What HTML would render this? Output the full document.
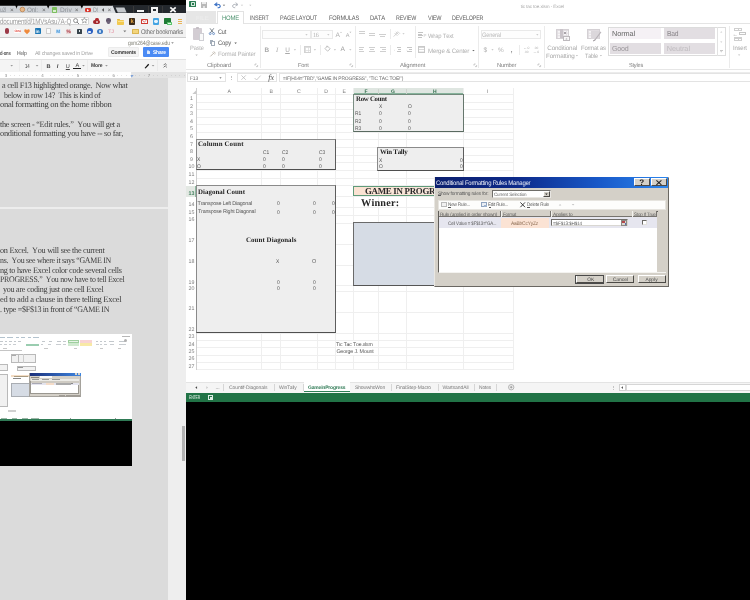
<!DOCTYPE html><html><head><meta charset="utf-8"><title>tic tac toe.xlsm - Excel</title><style>
html,body{margin:0;padding:0;}
body{width:750px;height:600px;overflow:hidden;background:#fff;position:relative;font-family:"Liberation Sans",sans-serif;}
.r{position:absolute;box-sizing:border-box;}
.t{position:absolute;white-space:pre;font-family:"Liberation Sans",sans-serif;text-rendering:geometricPrecision;font-kerning:none;}
.s{font-family:"Liberation Serif",serif;}
svg{position:absolute;overflow:visible;}
#w{position:absolute;left:-10px;top:-10px;width:770px;height:620px;background:#fff;filter:blur(0.4px);}
#c{position:absolute;left:10px;top:10px;width:750px;height:600px;}
</style></head><body>
<div id="w"><div id="c">
<div class="r" style="left:-10.00px;top:78.40px;width:178.00px;height:532.00px;background:#dbdbdb;"></div>
<div class="r" style="left:168.00px;top:78.40px;width:17.70px;height:532.00px;background:#eeeeee;"></div>
<div class="r" style="left:182.30px;top:426.00px;width:3.00px;height:35.00px;background:#b3b3b3;"></div>
<div class="r" style="left:-10.00px;top:-10.00px;width:195.70px;height:23.40px;background:#050505;"></div>
<div class="r" style="left:112.00px;top:4.80px;width:73.70px;height:8.80px;background:#24282d;"></div>
<svg style="left:0;top:0" width="190" height="14"><path d="M-22.5 13.4 L-19.2 5.8 L15.4 5.8 L18.7 13.4 Z" fill="#cdd1d6"/></svg>
<svg style="left:0;top:0" width="190" height="14"><path d="M14.3 13.4 L17.6 5.8 L46.9 5.8 L50.2 13.4 Z" fill="#cdd1d6"/></svg>
<svg style="left:0;top:0" width="190" height="14"><path d="M46.1 13.4 L49.4 5.8 L80.6 5.8 L83.9 13.4 Z" fill="#cdd1d6"/></svg>
<svg style="left:0;top:0" width="190" height="14"><path d="M79.8 13.4 L83.1 5.8 L112.7 5.8 L116.0 13.4 Z" fill="#d9dcdf"/></svg>
<svg style="left:0;top:0" width="190" height="14"><path d="M115.6 7.4 L124.4 7.4 L126.6 12.6 L117.8 12.6 Z" fill="#c4c8cc"/></svg>
<span class="t" style="left:0.00px;top:8px;font-size:6.6px;line-height:6.6px;color:#8d9196;letter-spacing:-0.231px;transform:scaleX(0.7390);transform-origin:0 50%;">u2l</span>
<span class="t" style="left:10.00px;top:8px;font-size:6.5px;line-height:6.5px;color:#666;">×</span>
<svg style="left:20.3px;top:7.4px" width="5" height="5"><circle cx="2.4" cy="2.5" r="2.3" fill="#e7b98a" stroke="#b9783f" stroke-width="0.7"/></svg>
<span class="t" style="left:27.30px;top:8px;font-size:6.6px;line-height:6.6px;color:#8d9196;letter-spacing:-0.231px;transform:scaleX(0.9579);transform-origin:0 50%;">Onl:</span>
<span class="t" style="left:42.00px;top:8px;font-size:6.5px;line-height:6.5px;color:#666;">×</span>
<div class="r" style="left:52.00px;top:7.20px;width:5.40px;height:5.40px;background:#7cbf5d;border-radius:0.8px;"></div>
<div class="r" style="left:53.00px;top:9.60px;width:3.40px;height:2.00px;background:#d9efcf;"></div>
<span class="t" style="left:60.00px;top:8px;font-size:6.6px;line-height:6.6px;color:#8d9196;letter-spacing:0.066px;">Driv</span>
<span class="t" style="left:74.80px;top:8px;font-size:6.5px;line-height:6.5px;color:#666;">×</span>
<div class="r" style="left:85.30px;top:7.60px;width:5.60px;height:4.60px;background:#d8362c;border-radius:1.2px;"></div>
<svg style="left:87.3px;top:8.7px" width="3" height="3"><path d="M0 0 L2.2 1.2 L0 2.4 Z" fill="#fff"/></svg>
<span class="t" style="left:93.00px;top:8px;font-size:6.6px;line-height:6.6px;color:#8d9196;letter-spacing:-0.231px;transform:scaleX(0.8154);transform-origin:0 50%;">D!</span>
<svg style="left:0;top:0" width="750" height="600"><polygon points="103.98,8.09 103.98,11.71 101.79,9.90" fill="#555"/></svg>
<span class="t" style="left:107.40px;top:8px;font-size:6.5px;line-height:6.5px;color:#666;">×</span>
<div class="r" style="left:133.30px;top:5.60px;width:0.60px;height:7.80px;background:#3a3a3a;"></div>
<div class="r" style="left:147.60px;top:5.60px;width:0.60px;height:7.80px;background:#3a3a3a;"></div>
<div class="r" style="left:162.00px;top:5.60px;width:0.60px;height:7.80px;background:#3a3a3a;"></div>
<div class="r" style="left:137.00px;top:10.40px;width:6.60px;height:2.10px;background:#f4f4f4;"></div>
<div class="r" style="left:150.70px;top:7.10px;width:7.00px;height:5.70px;background:#f4f4f4;"></div>
<div class="r" style="left:153.40px;top:8.60px;width:3.00px;height:2.40px;background:#2a2e33;"></div>
<svg style="left:169.7px;top:7.3px" width="6" height="5.4"><path d="M0.3 0.3 L5.7 5.1 M5.7 0.3 L0.3 5.1" stroke="#f6f6f6" stroke-width="1.8" fill="none"/></svg>
<div class="r" style="left:-10.00px;top:13.40px;width:195.70px;height:23.60px;background:#f1f1f1;"></div>
<div class="r" style="left:-10.00px;top:36.60px;width:195.70px;height:0.70px;background:#cdcdcd;"></div>
<div class="r" style="left:-2.00px;top:16.60px;width:91.00px;height:8.20px;background:#ffffff;border:0.6px solid #d6d6d6;border-radius:1px;"></div>
<span class="t" style="left:0.20px;top:18px;font-size:7.8px;line-height:7.8px;color:#9a9a9a;letter-spacing:-0.273px;transform:scaleX(0.8036);transform-origin:0 50%;">document/d/1MVsAsu7A-Q</span>
<svg style="left:73.4px;top:17.8px" width="7" height="7"><circle cx="2.6" cy="2.6" r="2" fill="none" stroke="#777" stroke-width="0.8"/><path d="M4 4 L6 6" stroke="#777" stroke-width="0.9"/></svg>
<svg style="left:81.2px;top:17.4px" width="7" height="7"><path d="M3.4 0.5 L4.2 2.5 L6.3 2.6 L4.7 4 L5.2 6.1 L3.4 4.9 L1.6 6.1 L2.1 4 L0.5 2.6 L2.6 2.5 Z" fill="none" stroke="#808080" stroke-width="0.6"/></svg>
<div class="r" style="left:93.40px;top:19.60px;width:6.80px;height:4.00px;background:#a3262a;border-radius:2px;"></div>
<div class="r" style="left:94.80px;top:18.40px;width:4.00px;height:3.00px;background:#b02a2e;border-radius:1.5px;"></div>
<div class="r" style="left:95.80px;top:21.00px;width:2.00px;height:1.60px;background:#e6b8b8;border-radius:0.8px;"></div>
<div class="r" style="left:105.80px;top:18.40px;width:5.00px;height:4.40px;background:#62566c;border-radius:2.2px;"></div>
<div class="r" style="left:107.40px;top:21.40px;width:2.60px;height:3.00px;background:#6f647a;border-radius:1.2px;"></div>
<div class="r" style="left:117.00px;top:19.60px;width:7.40px;height:5.00px;background:#f2c94f;border-radius:0.8px;"></div>
<div class="r" style="left:117.00px;top:18.80px;width:3.20px;height:1.60px;background:#e8b93a;border-radius:0.5px;"></div>
<div class="r" style="left:117.60px;top:20.60px;width:6.20px;height:0.50px;background:#f8e08e;"></div>
<div class="r" style="left:129.00px;top:18.20px;width:6.40px;height:6.60px;background:#3a2b1a;border-radius:0.8px;"></div>
<span class="t" style="left:130.60px;top:19px;font-size:6px;line-height:6px;color:#e2a23e;font-weight:bold;">k</span>
<div class="r" style="left:141.40px;top:18.80px;width:6.60px;height:5.40px;background:#f7f7f7;border-radius:0.6px;border:0.8px solid #d23a30;"></div>
<svg style="left:141.4px;top:18.8px" width="7" height="6"><path d="M1.2 1.2 L3.3 3 L5.4 1.2" fill="none" stroke="#d23a30" stroke-width="0.7"/></svg>
<div class="r" style="left:152.80px;top:18.20px;width:6.60px;height:6.60px;background:#45a4e2;border-radius:1px;"></div>
<div class="r" style="left:154.40px;top:19.80px;width:3.60px;height:3.00px;background:#eaf5fd;border-radius:1.4px;"></div>
<div class="r" style="left:164.40px;top:18.00px;width:6.40px;height:6.00px;background:#1f7a34;border-radius:0.6px;"></div>
<div class="r" style="left:166.80px;top:21.80px;width:5.40px;height:3.60px;background:#58c56c;border-radius:0.5px;"></div>
<div class="r" style="left:168.00px;top:22.60px;width:3.00px;height:1.60px;background:#e4f6e7;"></div>
<div class="r" style="left:177.80px;top:19.00px;width:4.40px;height:1.20px;background:#e9b458;"></div>
<div class="r" style="left:177.80px;top:20.90px;width:4.40px;height:1.20px;background:#e9b458;"></div>
<div class="r" style="left:177.80px;top:22.80px;width:4.40px;height:1.20px;background:#e9b458;"></div>
<div class="r" style="left:4.60px;top:28.40px;width:4.20px;height:5.80px;background:#9c3a48;border-radius:2px;"></div>
<div class="r" style="left:14.20px;top:29.40px;width:6.00px;height:3.60px;background:#ffffff;border-radius:1px;"></div>
<span class="t" style="left:14.60px;top:30px;font-size:3.4px;line-height:3.4px;color:#e03a2e;font-weight:bold;">One</span>
<svg style="left:24.4px;top:28.8px" width="6" height="5.4"><path d="M3 5.2 L0.3 2.4 Q-0.2 0.4 1.5 0.3 Q2.6 0.4 3 1.3 Q3.4 0.4 4.5 0.3 Q6.2 0.4 5.7 2.4 Z" fill="#ef8a3c"/></svg>
<div class="r" style="left:34.80px;top:28.40px;width:5.80px;height:5.80px;background:#1b76b5;border-radius:0.8px;"></div>
<span class="t" style="left:35.60px;top:30px;font-size:4.6px;line-height:4.6px;color:#fff;font-weight:bold;">in</span>
<div class="r" style="left:46.40px;top:28.40px;width:4.20px;height:5.60px;background:#fbfbfb;border-radius:0.3px;border:0.5px solid #cfcfcf;"></div>
<div class="r" style="left:55.60px;top:28.60px;width:5.40px;height:5.40px;background:#dfeefa;border-radius:0.5px;"></div>
<span class="t" style="left:56.20px;top:30px;font-size:4.6px;line-height:4.6px;color:#3b8fd6;font-weight:bold;">M</span>
<div class="r" style="left:66.00px;top:28.60px;width:5.40px;height:5.40px;background:#e9d6d6;border-radius:0.5px;"></div>
<span class="t" style="left:66.60px;top:31px;font-size:4.8px;line-height:4.8px;color:#a8323e;font-weight:bold;">%</span>
<div class="r" style="left:76.60px;top:28.60px;width:5.40px;height:5.40px;background:#39444c;border-radius:0.6px;"></div>
<div class="r" style="left:78.60px;top:30.40px;width:1.50px;height:1.50px;background:#dfe7ea;"></div>
<div class="r" style="left:86.80px;top:28.40px;width:5.80px;height:5.80px;background:#2a5fc0;border-radius:2.9px;"></div>
<div class="r" style="left:88.20px;top:31.40px;width:3.00px;height:1.80px;background:#e8eef8;border-radius:0.8px;"></div>
<div class="r" style="left:97.20px;top:28.60px;width:5.60px;height:5.60px;background:#3b78c2;border-radius:2.8px;"></div>
<div class="r" style="left:98.80px;top:30.20px;width:2.40px;height:2.40px;background:#c8dcf2;border-radius:1.2px;"></div>
<span class="t" style="left:108.20px;top:30px;font-size:5px;line-height:5px;color:#e7a6b4;font-weight:bold;">TJ</span>
<svg style="left:0;top:0" width="750" height="600"><polygon points="123.33,30.54 126.30,30.54 124.81,32.25" fill="#777"/></svg>
<div class="r" style="left:132.20px;top:28.80px;width:6.40px;height:4.80px;background:#f3d57c;border-radius:0.6px;border:0.5px solid #d9b552;"></div>
<span class="t" style="left:140.70px;top:30px;font-size:6.8px;line-height:6.8px;color:#6a6a6a;letter-spacing:-0.238px;transform:scaleX(0.8647);transform-origin:0 50%;">Other bookmarks</span>
<span class="t" style="left:128.00px;top:41px;font-size:6.2px;line-height:6.2px;color:#85857a;letter-spacing:-0.217px;transform:scaleX(0.8372);transform-origin:0 50%;">gxm264@case.edu</span>
<svg style="left:0;top:0" width="750" height="600"><polygon points="171.16,42.14 173.80,42.14 172.48,43.66" fill="#888"/></svg>
<span class="t" style="left:0.00px;top:52px;font-size:5.8px;line-height:5.8px;color:#555;font-weight:bold;letter-spacing:-0.203px;transform:scaleX(0.7246);transform-origin:0 50%;">d-ons</span>
<span class="t" style="left:17.00px;top:52px;font-size:5.8px;line-height:5.8px;color:#555;letter-spacing:-0.203px;transform:scaleX(0.8719);transform-origin:0 50%;">Help</span>
<span class="t" style="left:35.00px;top:52px;font-size:5.6px;line-height:5.6px;color:#a3a3a3;letter-spacing:-0.196px;transform:scaleX(0.9486);transform-origin:0 50%;">All changes saved in Drive</span>
<div class="r" style="left:108.00px;top:46.70px;width:31.30px;height:10.30px;background:#f4f4f4;border:0.5px solid #ececec;border-radius:1px;"></div>
<span class="t" style="left:111.00px;top:51px;font-size:5.4px;line-height:5.4px;color:#3c3c3c;font-weight:bold;letter-spacing:-0.189px;transform:scaleX(0.9489);transform-origin:0 50%;">Comments</span>
<div class="r" style="left:143.00px;top:46.70px;width:26.30px;height:10.30px;background:#4a8af4;border-radius:1px;"></div>
<div class="r" style="left:146.60px;top:51.00px;width:3.00px;height:2.60px;background:#dbe8fd;border-radius:0.5px;"></div>
<div class="r" style="left:147.20px;top:49.80px;width:1.80px;height:1.80px;border:0.5px solid #dbe8fd;border-radius:1px 1px 0 0;"></div>
<span class="t" style="left:153.30px;top:51px;font-size:5.4px;line-height:5.4px;color:#ffffff;font-weight:bold;letter-spacing:-0.189px;transform:scaleX(0.9046);transform-origin:0 50%;">Share</span>
<div class="r" style="left:-10.00px;top:58.70px;width:195.70px;height:13.40px;background:#f4f4f4;border-top:0.6px solid #e2e2e2;"></div>
<svg style="left:0;top:0" width="750" height="600"><polygon points="10.36,65.04 13.00,65.04 11.68,66.56" fill="#999"/></svg>
<div class="r" style="left:18.70px;top:59.60px;width:0.50px;height:11.60px;background:#ebebeb;"></div>
<span class="t" style="left:24.70px;top:64px;font-size:6px;line-height:6px;color:#444;letter-spacing:-0.210px;transform:scaleX(0.7180);transform-origin:0 50%;">14</span>
<svg style="left:0;top:0" width="750" height="600"><polygon points="35.76,65.04 38.40,65.04 37.08,66.56" fill="#999"/></svg>
<div class="r" style="left:41.30px;top:59.60px;width:0.50px;height:11.60px;background:#ebebeb;"></div>
<span class="t" style="left:46.60px;top:65px;font-size:5.6px;line-height:5.6px;color:#444;font-weight:bold;">B</span>
<span class="t" style="left:56.80px;top:65px;font-size:5.6px;line-height:5.6px;color:#444;font-weight:bold;font-style:italic;">I</span>
<span class="t" style="left:65.80px;top:65px;font-size:5.6px;line-height:5.6px;color:#444;text-decoration:underline;">U</span>
<span class="t" style="left:75.60px;top:64px;font-size:5.6px;line-height:5.6px;color:#444;">A</span>
<div class="r" style="left:73.00px;top:68.20px;width:8.00px;height:1.00px;background:#222;"></div>
<svg style="left:0;top:0" width="750" height="600"><polygon points="82.16,65.04 84.80,65.04 83.48,66.56" fill="#999"/></svg>
<div class="r" style="left:87.30px;top:59.60px;width:0.50px;height:11.60px;background:#ebebeb;"></div>
<span class="t" style="left:91.30px;top:64px;font-size:5.4px;line-height:5.4px;color:#444;font-weight:bold;letter-spacing:-0.189px;transform:scaleX(0.9395);transform-origin:0 50%;">More</span>
<svg style="left:0;top:0" width="750" height="600"><polygon points="105.16,65.04 107.80,65.04 106.48,66.56" fill="#999"/></svg>
<svg style="left:144px;top:62.8px" width="6" height="6"><path d="M0.6 5 L4.2 0.8 L5.2 1.8 L1.6 5.6 Z" fill="#111"/></svg>
<svg style="left:0;top:0" width="750" height="600"><polygon points="151.76,65.04 154.40,65.04 153.08,66.56" fill="#999"/></svg>
<div class="r" style="left:157.30px;top:59.60px;width:0.50px;height:11.60px;background:#ebebeb;"></div>
<svg style="left:162.6px;top:63.2px" width="5" height="5"><path d="M0.6 2.2 L2.2 0.6 L3.8 2.2 M0.6 4.4 L2.2 2.8 L3.8 4.4" fill="none" stroke="#555" stroke-width="0.8"/></svg>
<div class="r" style="left:0.00px;top:72.10px;width:185.70px;height:6.30px;background:#ffffff;"></div>
<div class="r" style="left:131.30px;top:72.10px;width:54.40px;height:6.30px;background:#e4e4e4;"></div>
<span class="t" style="left:4.80px;top:74px;font-size:4.4px;line-height:4.4px;color:#8a8a8a;">3</span>
<span class="t" style="left:41.20px;top:74px;font-size:4.4px;line-height:4.4px;color:#8a8a8a;">4</span>
<span class="t" style="left:76.80px;top:74px;font-size:4.4px;line-height:4.4px;color:#8a8a8a;">5</span>
<span class="t" style="left:112.50px;top:74px;font-size:4.4px;line-height:4.4px;color:#8a8a8a;">6</span>
<span class="t" style="left:147.80px;top:74px;font-size:4.4px;line-height:4.4px;color:#8a8a8a;">7</span>
<svg style="left:129.5px;top:75px" width="4" height="3"><path d="M0 0 L3.6 0 L1.8 2.6 Z" fill="#7fa3d8"/></svg>
<div class="r" style="left:9.60px;top:74.80px;width:0.40px;height:1.00px;background:#e3e3e3;"></div>
<div class="r" style="left:14.07px;top:74.80px;width:0.40px;height:1.00px;background:#e3e3e3;"></div>
<div class="r" style="left:18.54px;top:74.80px;width:0.40px;height:1.00px;background:#e3e3e3;"></div>
<div class="r" style="left:23.01px;top:74.80px;width:0.40px;height:1.00px;background:#e3e3e3;"></div>
<div class="r" style="left:27.48px;top:74.80px;width:0.40px;height:1.00px;background:#e3e3e3;"></div>
<div class="r" style="left:31.95px;top:74.80px;width:0.40px;height:1.00px;background:#e3e3e3;"></div>
<div class="r" style="left:36.42px;top:74.80px;width:0.40px;height:1.00px;background:#e3e3e3;"></div>
<div class="r" style="left:49.83px;top:74.80px;width:0.40px;height:1.00px;background:#e3e3e3;"></div>
<div class="r" style="left:54.30px;top:74.80px;width:0.40px;height:1.00px;background:#e3e3e3;"></div>
<div class="r" style="left:58.77px;top:74.80px;width:0.40px;height:1.00px;background:#e3e3e3;"></div>
<div class="r" style="left:63.24px;top:74.80px;width:0.40px;height:1.00px;background:#e3e3e3;"></div>
<div class="r" style="left:67.71px;top:74.80px;width:0.40px;height:1.00px;background:#e3e3e3;"></div>
<div class="r" style="left:72.18px;top:74.80px;width:0.40px;height:1.00px;background:#e3e3e3;"></div>
<div class="r" style="left:81.12px;top:74.80px;width:0.40px;height:1.00px;background:#e3e3e3;"></div>
<div class="r" style="left:85.59px;top:74.80px;width:0.40px;height:1.00px;background:#e3e3e3;"></div>
<div class="r" style="left:90.06px;top:74.80px;width:0.40px;height:1.00px;background:#e3e3e3;"></div>
<div class="r" style="left:94.53px;top:74.80px;width:0.40px;height:1.00px;background:#e3e3e3;"></div>
<div class="r" style="left:99.00px;top:74.80px;width:0.40px;height:1.00px;background:#e3e3e3;"></div>
<div class="r" style="left:103.47px;top:74.80px;width:0.40px;height:1.00px;background:#e3e3e3;"></div>
<div class="r" style="left:107.94px;top:74.80px;width:0.40px;height:1.00px;background:#e3e3e3;"></div>
<div class="r" style="left:116.88px;top:74.80px;width:0.40px;height:1.00px;background:#e3e3e3;"></div>
<div class="r" style="left:121.35px;top:74.80px;width:0.40px;height:1.00px;background:#e3e3e3;"></div>
<div class="r" style="left:125.82px;top:74.80px;width:0.40px;height:1.00px;background:#e3e3e3;"></div>
<div class="r" style="left:130.29px;top:74.80px;width:0.40px;height:1.00px;background:#e3e3e3;"></div>
<div class="r" style="left:134.76px;top:74.80px;width:0.40px;height:1.00px;background:#d2d2d2;"></div>
<div class="r" style="left:139.23px;top:74.80px;width:0.40px;height:1.00px;background:#d2d2d2;"></div>
<div class="r" style="left:143.70px;top:74.80px;width:0.40px;height:1.00px;background:#d2d2d2;"></div>
<div class="r" style="left:152.64px;top:74.80px;width:0.40px;height:1.00px;background:#d2d2d2;"></div>
<div class="r" style="left:157.11px;top:74.80px;width:0.40px;height:1.00px;background:#d2d2d2;"></div>
<div class="r" style="left:161.58px;top:74.80px;width:0.40px;height:1.00px;background:#d2d2d2;"></div>
<div class="r" style="left:166.05px;top:74.80px;width:0.40px;height:1.00px;background:#d2d2d2;"></div>
<div class="r" style="left:170.52px;top:74.80px;width:0.40px;height:1.00px;background:#d2d2d2;"></div>
<div class="r" style="left:174.99px;top:74.80px;width:0.40px;height:1.00px;background:#d2d2d2;"></div>
<div class="r" style="left:179.46px;top:74.80px;width:0.40px;height:1.00px;background:#d2d2d2;"></div>
<div class="r" style="left:183.93px;top:74.80px;width:0.40px;height:1.00px;background:#d2d2d2;"></div>
<span class="t s" style="left:2.00px;top:81px;font-size:8.6px;line-height:8.6px;color:#3c3c3c;letter-spacing:-0.301px;transform:scaleX(0.9595);transform-origin:0 50%;">a cell F13 highlighted orange.  Now what</span>
<span class="t s" style="left:3.60px;top:91px;font-size:8.6px;line-height:8.6px;color:#3c3c3c;letter-spacing:-0.301px;transform:scaleX(0.9254);transform-origin:0 50%;">below in row 14?  This is kind of</span>
<span class="t s" style="left:0.00px;top:100px;font-size:8.6px;line-height:8.6px;color:#3c3c3c;letter-spacing:-0.301px;transform:scaleX(0.9928);transform-origin:0 50%;">onal formatting on the home ribbon</span>
<span class="t s" style="left:0.00px;top:120px;font-size:8.6px;line-height:8.6px;color:#3c3c3c;letter-spacing:-0.301px;transform:scaleX(0.9577);transform-origin:0 50%;">the screen - “Edit rules.”  You will get a</span>
<span class="t s" style="left:0.00px;top:129px;font-size:8.6px;line-height:8.6px;color:#3c3c3c;letter-spacing:-0.301px;transform:scaleX(0.9774);transform-origin:0 50%;">onditional formatting you have -- so far,</span>
<div class="r" style="left:-10.00px;top:207.00px;width:178.00px;height:2.30px;background:#ededed;"></div>
<span class="t s" style="left:0.00px;top:246px;font-size:8.6px;line-height:8.6px;color:#3c3c3c;letter-spacing:-0.301px;transform:scaleX(0.9596);transform-origin:0 50%;">on Excel.  You will see the current</span>
<span class="t s" style="left:0.00px;top:256px;font-size:8.6px;line-height:8.6px;color:#3c3c3c;letter-spacing:-0.301px;transform:scaleX(0.9175);transform-origin:0 50%;">ns.  You see where it says “GAME IN</span>
<span class="t s" style="left:0.00px;top:266px;font-size:8.6px;line-height:8.6px;color:#3c3c3c;letter-spacing:-0.301px;transform:scaleX(0.9520);transform-origin:0 50%;">ng to have Excel color code several cells</span>
<span class="t s" style="left:0.00px;top:275px;font-size:8.6px;line-height:8.6px;color:#3c3c3c;letter-spacing:-0.301px;transform:scaleX(0.9142);transform-origin:0 50%;">PROGRESS.”  You now have to tell Excel</span>
<span class="t s" style="left:3.00px;top:285px;font-size:8.6px;line-height:8.6px;color:#3c3c3c;letter-spacing:-0.301px;transform:scaleX(0.9452);transform-origin:0 50%;">you are coding just one cell Excel</span>
<span class="t s" style="left:0.00px;top:295px;font-size:8.6px;line-height:8.6px;color:#3c3c3c;letter-spacing:-0.301px;transform:scaleX(0.9876);transform-origin:0 50%;">ed to add a clause in there telling Excel</span>
<span class="t s" style="left:0.40px;top:305px;font-size:8.6px;line-height:8.6px;color:#3c3c3c;letter-spacing:-0.301px;transform:scaleX(0.9310);transform-origin:0 50%;">. type =$F$13 in front of “GAME IN</span>
<div class="r" style="left:-10.00px;top:333.60px;width:142.00px;height:87.40px;background:#ffffff;"></div>
<div class="r" style="left:-10.00px;top:421.00px;width:142.00px;height:45.00px;background:#000000;"></div>
<div class="r" style="left:-10.00px;top:419.40px;width:142.00px;height:1.70px;background:#2f7a55;"></div>
<div class="r" style="left:0.00px;top:352.40px;width:47.00px;height:66.00px;background-image:linear-gradient(#ececec 0.4px,transparent 0.4px),linear-gradient(90deg,#ececec 0.4px,transparent 0.4px);background-size:6px 2.6px,6px 2.6px;"></div>
<div class="r" style="left:0.00px;top:337.00px;width:5.00px;height:0.90px;background:#b4c3ce;"></div>
<div class="r" style="left:7.00px;top:337.00px;width:6.00px;height:0.90px;background:#b4c3ce;"></div>
<div class="r" style="left:15.50px;top:337.00px;width:3.50px;height:0.90px;background:#b4c3ce;"></div>
<div class="r" style="left:21.00px;top:337.00px;width:4.00px;height:0.90px;background:#b4c3ce;"></div>
<div class="r" style="left:27.60px;top:337.00px;width:3.00px;height:0.90px;background:#b4c3ce;"></div>
<div class="r" style="left:33.00px;top:337.00px;width:6.00px;height:0.90px;background:#b4c3ce;"></div>
<div class="r" style="left:0.00px;top:340.60px;width:3.00px;height:1.00px;background:#c3c8cc;"></div>
<div class="r" style="left:5.00px;top:340.60px;width:2.40px;height:1.00px;background:#c3c8cc;"></div>
<div class="r" style="left:9.00px;top:340.60px;width:3.00px;height:1.00px;background:#c3c8cc;"></div>
<div class="r" style="left:14.00px;top:340.60px;width:2.00px;height:1.00px;background:#c3c8cc;"></div>
<div class="r" style="left:18.00px;top:340.60px;width:3.00px;height:1.00px;background:#c3c8cc;"></div>
<div class="r" style="left:42.00px;top:340.60px;width:3.00px;height:1.00px;background:#c3c8cc;"></div>
<div class="r" style="left:49.00px;top:340.60px;width:3.00px;height:1.00px;background:#c3c8cc;"></div>
<div class="r" style="left:57.00px;top:340.60px;width:4.00px;height:1.00px;background:#c3c8cc;"></div>
<div class="r" style="left:63.00px;top:340.60px;width:3.00px;height:1.00px;background:#c3c8cc;"></div>
<div class="r" style="left:96.00px;top:340.60px;width:2.00px;height:1.00px;background:#c3c8cc;"></div>
<div class="r" style="left:100.00px;top:340.60px;width:2.40px;height:1.00px;background:#c3c8cc;"></div>
<div class="r" style="left:104.00px;top:340.60px;width:2.00px;height:1.00px;background:#c3c8cc;"></div>
<div class="r" style="left:109.00px;top:340.60px;width:5.00px;height:1.00px;background:#c3c8cc;"></div>
<div class="r" style="left:119.00px;top:340.60px;width:6.00px;height:1.00px;background:#c3c8cc;"></div>
<div class="r" style="left:0.00px;top:344.40px;width:2.40px;height:1.00px;background:#c9cdd1;"></div>
<div class="r" style="left:4.00px;top:344.40px;width:3.00px;height:1.00px;background:#c9cdd1;"></div>
<div class="r" style="left:9.00px;top:344.40px;width:2.00px;height:1.00px;background:#c9cdd1;"></div>
<div class="r" style="left:13.00px;top:344.40px;width:3.00px;height:1.00px;background:#c9cdd1;"></div>
<div class="r" style="left:41.00px;top:344.40px;width:2.00px;height:1.00px;background:#c9cdd1;"></div>
<div class="r" style="left:48.00px;top:344.40px;width:3.00px;height:1.00px;background:#c9cdd1;"></div>
<div class="r" style="left:56.00px;top:344.40px;width:5.00px;height:1.00px;background:#c9cdd1;"></div>
<div class="r" style="left:63.00px;top:344.40px;width:3.00px;height:1.00px;background:#c9cdd1;"></div>
<div class="r" style="left:96.00px;top:344.40px;width:3.00px;height:1.00px;background:#c9cdd1;"></div>
<div class="r" style="left:100.00px;top:344.40px;width:2.00px;height:1.00px;background:#c9cdd1;"></div>
<div class="r" style="left:104.00px;top:344.40px;width:3.00px;height:1.00px;background:#c9cdd1;"></div>
<div class="r" style="left:110.00px;top:344.40px;width:4.00px;height:1.00px;background:#c9cdd1;"></div>
<div class="r" style="left:119.00px;top:344.40px;width:7.00px;height:1.00px;background:#c9cdd1;"></div>
<div class="r" style="left:26.00px;top:343.80px;width:13.00px;height:2.30px;background:#9acdb0;"></div>
<div class="r" style="left:68.00px;top:339.60px;width:11.00px;height:3.00px;background:#e6f3e6;border:0.4px solid #9fcf9f;"></div>
<div class="r" style="left:68.00px;top:343.20px;width:11.00px;height:2.80px;background:#cfe9cf;"></div>
<div class="r" style="left:80.00px;top:339.60px;width:12.00px;height:3.00px;background:#f8d4d4;"></div>
<div class="r" style="left:80.00px;top:343.20px;width:12.00px;height:2.80px;background:#f8e9a6;"></div>
<div class="r" style="left:122.00px;top:335.80px;width:8.00px;height:1.00px;background:#b7b7b7;"></div>
<div class="r" style="left:124.00px;top:338.60px;width:3.40px;height:3.00px;background:#b0b0b0;border-radius:1.6px;"></div>
<div class="r" style="left:3.00px;top:348.40px;width:4.00px;height:0.80px;background:#c8c8c8;"></div>
<div class="r" style="left:44.00px;top:348.40px;width:4.00px;height:0.80px;background:#c8c8c8;"></div>
<div class="r" style="left:74.00px;top:348.40px;width:3.00px;height:0.80px;background:#c8c8c8;"></div>
<div class="r" style="left:100.00px;top:348.40px;width:3.00px;height:0.80px;background:#c8c8c8;"></div>
<div class="r" style="left:118.00px;top:348.40px;width:3.00px;height:0.80px;background:#c8c8c8;"></div>
<div class="r" style="left:0.00px;top:350.40px;width:22.00px;height:0.90px;background:#c5c5c5;"></div>
<div class="r" style="left:11.40px;top:354.00px;width:24.60px;height:9.00px;background:#f1f1f1;border:0.4px solid #b9b9b9;"></div>
<div class="r" style="left:12.40px;top:355.00px;width:4.00px;height:0.80px;background:#aaa;"></div>
<div class="r" style="left:17.50px;top:354.40px;width:0.40px;height:8.40px;background:#bbb;"></div>
<div class="r" style="left:23.00px;top:354.40px;width:0.40px;height:8.40px;background:#ccc;"></div>
<div class="r" style="left:17.00px;top:366.00px;width:19.00px;height:5.40px;background:#f1f1f1;border:0.4px solid #b9b9b9;"></div>
<div class="r" style="left:18.00px;top:367.00px;width:4.60px;height:0.80px;background:#999;"></div>
<div class="r" style="left:-1.00px;top:364.40px;width:8.60px;height:6.80px;background:#f1f1f1;border:0.4px solid #b9b9b9;"></div>
<div class="r" style="left:-1.00px;top:374.40px;width:8.60px;height:33.00px;background:#f1f1f1;border:0.4px solid #b9b9b9;"></div>
<div class="r" style="left:11.40px;top:375.00px;width:19.00px;height:2.40px;background:#f3dcc4;"></div>
<div class="r" style="left:14.00px;top:375.70px;width:14.00px;height:1.00px;background:#a89a80;"></div>
<div class="r" style="left:13.00px;top:378.30px;width:8.00px;height:1.10px;background:#888;"></div>
<div class="r" style="left:11.40px;top:383.00px;width:19.00px;height:13.60px;background:#d6dce5;border:0.4px solid #a9adb3;"></div>
<div class="r" style="left:8.00px;top:409.60px;width:7.60px;height:1.60px;background:#ececec;border:0.3px solid #d0d0d0;"></div>
<div class="r" style="left:29.40px;top:372.60px;width:51.80px;height:24.60px;background:#d4d0c8;border:0.4px solid #a5a29c;"></div>
<div class="r" style="left:29.80px;top:373.00px;width:51.00px;height:2.60px;background:linear-gradient(90deg,#1a2f7a,#3f86e0);"></div>
<div class="r" style="left:74.60px;top:373.30px;width:2.40px;height:2.00px;background:#d6d2ca;"></div>
<div class="r" style="left:77.60px;top:373.30px;width:2.60px;height:2.00px;background:#d6d2ca;"></div>
<div class="r" style="left:31.00px;top:376.60px;width:8.00px;height:0.80px;background:#8c8880;"></div>
<div class="r" style="left:40.00px;top:376.30px;width:12.00px;height:1.50px;background:#f8f8f8;"></div>
<div class="r" style="left:30.60px;top:378.60px;width:48.60px;height:2.00px;background:#ecebe6;"></div>
<div class="r" style="left:31.50px;top:379.20px;width:7.00px;height:0.80px;background:#999;"></div>
<div class="r" style="left:42.00px;top:379.20px;width:7.00px;height:0.80px;background:#999;"></div>
<div class="r" style="left:52.00px;top:379.20px;width:8.00px;height:0.80px;background:#999;"></div>
<div class="r" style="left:30.40px;top:381.00px;width:48.60px;height:13.20px;background:#ffffff;border:0.4px solid #9a9790;"></div>
<div class="r" style="left:30.80px;top:381.20px;width:48.00px;height:1.40px;background:#cfcbc3;"></div>
<div class="r" style="left:30.80px;top:382.80px;width:48.00px;height:2.00px;background:#e4e4ee;"></div>
<div class="r" style="left:32.00px;top:383.40px;width:10.00px;height:0.80px;background:#a9a9b4;"></div>
<div class="r" style="left:46.00px;top:383.00px;width:8.00px;height:1.50px;background:#f5dcc8;"></div>
<div class="r" style="left:55.50px;top:383.00px;width:15.00px;height:1.50px;background:#ffffff;border:0.3px solid #aaa;"></div>
<div class="r" style="left:71.40px;top:383.20px;width:1.20px;height:1.20px;background:#888;"></div>
<div class="r" style="left:59.00px;top:394.60px;width:6.40px;height:1.90px;background:#d8d4cc;border:0.3px solid #a09c95;"></div>
<div class="r" style="left:66.20px;top:394.60px;width:6.40px;height:1.90px;background:#d8d4cc;border:0.3px solid #a09c95;"></div>
<div class="r" style="left:73.40px;top:394.60px;width:6.40px;height:1.90px;background:#d8d4cc;border:0.3px solid #a09c95;"></div>
<div class="r" style="left:1.00px;top:418.00px;width:6.00px;height:0.80px;background:#9db7a7;"></div>
<div class="r" style="left:12.00px;top:418.00px;width:5.00px;height:0.80px;background:#9db7a7;"></div>
<div class="r" style="left:22.00px;top:418.00px;width:6.00px;height:0.80px;background:#9db7a7;"></div>
<div class="r" style="left:31.00px;top:418.00px;width:8.00px;height:0.80px;background:#9db7a7;"></div>
<div class="r" style="left:70.00px;top:418.30px;width:1.00px;height:0.80px;background:#999;"></div>
<div class="r" style="left:115.00px;top:418.30px;width:1.00px;height:0.80px;background:#999;"></div>
<div class="r" style="left:189.00px;top:1.00px;width:6.80px;height:5.80px;background:#2a7b52;border-radius:0.6px;"></div>
<div class="r" style="left:191.40px;top:1.80px;width:3.20px;height:4.20px;background:#d9ebe1;border-radius:0.4px;"></div>
<div class="r" style="left:192.40px;top:2.60px;width:1.40px;height:2.60px;background:#2a7b52;"></div>
<div class="r" style="left:201.00px;top:2.40px;width:6.00px;height:5.40px;background:#b9b9b9;border-radius:0.5px;"></div>
<div class="r" style="left:202.20px;top:2.40px;width:3.60px;height:2.00px;background:#ececec;"></div>
<div class="r" style="left:202.60px;top:5.60px;width:2.80px;height:2.20px;background:#e3e3e3;"></div>
<svg style="left:214px;top:2px" width="9" height="7"><path d="M3.2 0.6 L0.8 2.6 L3.4 4" fill="none" stroke="#3f74c6" stroke-width="1.1"/><path d="M1 2.6 Q5.8 1.6 6.3 4 Q6.3 5.8 3.6 5.8" fill="none" stroke="#3f74c6" stroke-width="1.1"/></svg>
<svg style="left:0;top:0" width="750" height="600"><polygon points="222.78,4.72 225.16,4.72 223.97,6.08" fill="#666"/></svg>
<svg style="left:231.4px;top:2px" width="9" height="7"><path d="M4.6 0.6 L7 2.6 L4.4 4" fill="none" stroke="#b5b9c0" stroke-width="1"/><path d="M6.8 2.6 Q2 1.6 1.5 4 Q1.5 5.8 4.2 5.8" fill="none" stroke="#b5b9c0" stroke-width="1"/></svg>
<svg style="left:0;top:0" width="750" height="600"><polygon points="240.78,4.72 243.16,4.72 241.97,6.08" fill="#c9c9c9"/></svg>
<svg style="left:0;top:0" width="750" height="600"><polygon points="249.20,4.75 251.44,4.75 250.32,6.05" fill="#c4c4c4"/></svg>
<span class="t" style="left:520.70px;top:5px;font-size:4.6px;line-height:4.6px;color:#a9a9a9;letter-spacing:-0.100px;">tic tac toe.xlsm - Excel</span>
<div class="r" style="left:186.40px;top:10.80px;width:30.00px;height:12.60px;background:#e6e6e6;"></div>
<span class="t" style="left:196.00px;top:16px;font-size:6px;line-height:6px;color:#eeeeee;">FILE</span>
<div class="r" style="left:186.40px;top:23.20px;width:563.60px;height:0.60px;background:#e4e4e4;"></div>
<div class="r" style="left:217.00px;top:11.30px;width:26.80px;height:12.60px;background:#ffffff;border:0.6px solid #e2e2e2;border-bottom:none;"></div>
<span class="t" style="left:222.00px;top:16px;font-size:6.4px;line-height:6.4px;color:#4f9370;letter-spacing:-0.224px;transform:scaleX(0.9294);transform-origin:0 50%;">HOME</span>
<span class="t" style="left:250.00px;top:16px;font-size:6.4px;line-height:6.4px;color:#5e5e5e;letter-spacing:-0.224px;transform:scaleX(0.8464);transform-origin:0 50%;">INSERT</span>
<span class="t" style="left:280.00px;top:16px;font-size:6.4px;line-height:6.4px;color:#5e5e5e;letter-spacing:-0.224px;transform:scaleX(0.8676);transform-origin:0 50%;">PAGE LAYOUT</span>
<span class="t" style="left:328.70px;top:16px;font-size:6.4px;line-height:6.4px;color:#5e5e5e;letter-spacing:-0.224px;transform:scaleX(0.8896);transform-origin:0 50%;">FORMULAS</span>
<span class="t" style="left:370.00px;top:16px;font-size:6.4px;line-height:6.4px;color:#5e5e5e;letter-spacing:-0.224px;transform:scaleX(0.9287);transform-origin:0 50%;">DATA</span>
<span class="t" style="left:396.00px;top:16px;font-size:6.4px;line-height:6.4px;color:#5e5e5e;letter-spacing:-0.224px;transform:scaleX(0.8377);transform-origin:0 50%;">REVIEW</span>
<span class="t" style="left:427.60px;top:16px;font-size:6.4px;line-height:6.4px;color:#5e5e5e;letter-spacing:-0.224px;transform:scaleX(0.8674);transform-origin:0 50%;">VIEW</span>
<span class="t" style="left:452.00px;top:16px;font-size:6.4px;line-height:6.4px;color:#5e5e5e;letter-spacing:-0.224px;transform:scaleX(0.8445);transform-origin:0 50%;">DEVELOPER</span>
<div class="r" style="left:186.40px;top:69.20px;width:563.60px;height:0.60px;background:#e6e6e6;"></div>
<div class="r" style="left:186.40px;top:72.40px;width:563.60px;height:0.50px;background:#ececec;"></div>
<div class="r" style="left:260.30px;top:25.60px;width:0.50px;height:42.00px;background:#ebebeb;"></div>
<div class="r" style="left:355.30px;top:25.60px;width:0.50px;height:42.00px;background:#ebebeb;"></div>
<div class="r" style="left:478.30px;top:25.60px;width:0.50px;height:42.00px;background:#ebebeb;"></div>
<div class="r" style="left:543.70px;top:25.60px;width:0.50px;height:42.00px;background:#ebebeb;"></div>
<div class="r" style="left:728.70px;top:25.60px;width:0.50px;height:42.00px;background:#ebebeb;"></div>
<span class="t" style="left:207.00px;top:64px;font-size:5.9px;line-height:5.9px;color:#7d7d7d;letter-spacing:-0.135px;">Clipboard</span>
<span class="t" style="left:298.00px;top:64px;font-size:5.9px;line-height:5.9px;color:#7d7d7d;letter-spacing:-0.207px;transform:scaleX(0.9753);transform-origin:0 50%;">Font</span>
<span class="t" style="left:400.00px;top:64px;font-size:5.9px;line-height:5.9px;color:#7d7d7d;letter-spacing:-0.100px;">Alignment</span>
<span class="t" style="left:497.00px;top:64px;font-size:5.9px;line-height:5.9px;color:#7d7d7d;letter-spacing:-0.207px;transform:scaleX(0.9790);transform-origin:0 50%;">Number</span>
<span class="t" style="left:628.70px;top:64px;font-size:5.9px;line-height:5.9px;color:#7d7d7d;letter-spacing:-0.207px;transform:scaleX(0.9454);transform-origin:0 50%;">Styles</span>
<svg style="left:255.4px;top:63.6px" width="3" height="3"><path d="M0 0 L0 0.1 M0 0 H1.6 M0 0 V1.6 M2.6 1 V2.6 H1" stroke="#9a9a9a" stroke-width="0.5" fill="none"/></svg>
<svg style="left:350.4px;top:63.6px" width="3" height="3"><path d="M0 0 L0 0.1 M0 0 H1.6 M0 0 V1.6 M2.6 1 V2.6 H1" stroke="#9a9a9a" stroke-width="0.5" fill="none"/></svg>
<svg style="left:473.8px;top:63.6px" width="3" height="3"><path d="M0 0 L0 0.1 M0 0 H1.6 M0 0 V1.6 M2.6 1 V2.6 H1" stroke="#9a9a9a" stroke-width="0.5" fill="none"/></svg>
<svg style="left:538.4px;top:63.6px" width="3" height="3"><path d="M0 0 L0 0.1 M0 0 H1.6 M0 0 V1.6 M2.6 1 V2.6 H1" stroke="#9a9a9a" stroke-width="0.5" fill="none"/></svg>
<div class="r" style="left:193.20px;top:28.20px;width:8.60px;height:11.60px;background:#d3cdd3;border-radius:0.8px;"></div>
<div class="r" style="left:195.60px;top:27.00px;width:3.80px;height:2.20px;background:#c5bfc5;border-radius:0.6px;"></div>
<div class="r" style="left:198.60px;top:33.20px;width:5.80px;height:7.60px;background:#fafafa;border:0.5px solid #cfcfd4;"></div>
<span class="t" style="left:190.00px;top:46px;font-size:6.3px;line-height:6.3px;color:#b3b3b3;letter-spacing:-0.221px;transform:scaleX(0.9129);transform-origin:0 50%;">Paste</span>
<svg style="left:0;top:0" width="750" height="600"><polygon points="195.38,54.52 197.76,54.52 196.57,55.88" fill="#bdbdbd"/></svg>
<svg style="left:209.4px;top:27.8px" width="6" height="7"><path d="M1 0.3 L4.4 4.8 M4.8 0.3 L1.4 4.8" stroke="#5c6670" stroke-width="0.8" fill="none"/><circle cx="1.2" cy="5.6" r="1" fill="none" stroke="#4c78b8" stroke-width="0.7"/><circle cx="4.6" cy="5.6" r="1" fill="none" stroke="#4c78b8" stroke-width="0.7"/></svg>
<span class="t" style="left:218.00px;top:30px;font-size:6.6px;line-height:6.6px;color:#575757;letter-spacing:-0.231px;transform:scaleX(0.8357);transform-origin:0 50%;">Cut</span>
<div class="r" style="left:209.60px;top:39.80px;width:3.40px;height:4.40px;background:#fff;border:0.5px solid #a3adb9;"></div>
<div class="r" style="left:211.40px;top:41.40px;width:3.60px;height:4.60px;background:#fff;border:0.5px solid #a3adb9;"></div>
<span class="t" style="left:218.00px;top:41px;font-size:6.6px;line-height:6.6px;color:#575757;letter-spacing:-0.231px;transform:scaleX(0.8977);transform-origin:0 50%;">Copy</span>
<svg style="left:0;top:0" width="750" height="600"><polygon points="234.37,42.58 236.88,42.58 235.63,44.02" fill="#5c5c5c"/></svg>
<svg style="left:209.6px;top:51px" width="7" height="6"><path d="M0.4 5.4 L3.4 2.4 M2.6 1.4 L4.6 3.4 M3.6 0.6 L5.6 2.2" stroke="#b8b0a4" stroke-width="0.9" fill="none"/></svg>
<span class="t" style="left:218.00px;top:52px;font-size:6.3px;line-height:6.3px;color:#b3b3b3;letter-spacing:-0.221px;transform:scaleX(0.9697);transform-origin:0 50%;">Format Painter</span>
<div class="r" style="left:262.30px;top:30.00px;width:48.80px;height:9.30px;background:#fdfdfd;border:0.5px solid #e9e9e9;"></div>
<div class="r" style="left:311.00px;top:30.00px;width:21.70px;height:9.30px;background:#fdfdfd;border:0.5px solid #e9e9e9;"></div>
<svg style="left:0;top:0" width="750" height="600"><polygon points="305.40,34.15 307.64,34.15 306.52,35.45" fill="#bbb"/></svg>
<span class="t s" style="left:313.00px;top:33px;font-size:6.4px;line-height:6.4px;color:#b5b5b5;letter-spacing:-0.224px;transform:scaleX(0.9592);transform-origin:0 50%;">16</span>
<svg style="left:0;top:0" width="750" height="600"><polygon points="327.20,34.15 329.44,34.15 328.32,35.45" fill="#bbb"/></svg>
<span class="t" style="left:335.60px;top:33px;font-size:6.6px;line-height:6.6px;color:#b0b0b0;">A</span>
<svg style="left:0;top:0" width="750" height="600"><polygon points="340.02,32.77 342.00,32.77 341.01,31.63" fill="#b8b8b8"/></svg>
<span class="t" style="left:345.80px;top:34px;font-size:5.6px;line-height:5.6px;color:#b0b0b0;">A</span>
<svg style="left:0;top:0" width="750" height="600"><polygon points="349.42,31.83 351.40,31.83 350.41,32.97" fill="#b8b8b8"/></svg>
<span class="t" style="left:264.60px;top:48px;font-size:6.4px;line-height:6.4px;color:#a9a9a9;font-weight:bold;">B</span>
<span class="t s" style="left:276.00px;top:48px;font-size:6.4px;line-height:6.4px;color:#a9a9a9;font-style:italic;">I</span>
<span class="t" style="left:285.20px;top:48px;font-size:6.4px;line-height:6.4px;color:#a9a9a9;text-decoration:underline;">U</span>
<svg style="left:0;top:0" width="750" height="600"><polygon points="293.80,49.15 296.04,49.15 294.92,50.45" fill="#bbb"/></svg>
<div class="r" style="left:300.00px;top:44.60px;width:0.50px;height:10.00px;background:#ebebeb;"></div>
<div class="r" style="left:304.00px;top:46.00px;width:7.20px;height:7.20px;border:0.5px solid #d2d2d2;background-image:linear-gradient(#dcdcdc 0.5px,transparent 0.5px),linear-gradient(90deg,#dcdcdc 0.5px,transparent 0.5px);background-size:3.3px 3.3px;"></div>
<svg style="left:0;top:0" width="750" height="600"><polygon points="313.80,49.15 316.04,49.15 314.92,50.45" fill="#bbb"/></svg>
<div class="r" style="left:320.00px;top:44.60px;width:0.50px;height:10.00px;background:#ebebeb;"></div>
<svg style="left:324.4px;top:45.4px" width="8" height="8"><path d="M3.4 1 L6.2 3.8 L3.6 6.2 L1 3.6 Z" fill="none" stroke="#b3b3b3" stroke-width="0.8"/><path d="M3 0.6 V2.4" stroke="#b3b3b3" stroke-width="0.7"/></svg>
<svg style="left:0;top:0" width="750" height="600"><polygon points="333.80,49.15 336.04,49.15 334.92,50.45" fill="#bbb"/></svg>
<span class="t" style="left:340.60px;top:47px;font-size:6.6px;line-height:6.6px;color:#9f9f9f;">A</span>
<svg style="left:0;top:0" width="750" height="600"><polygon points="349.20,49.15 351.44,49.15 350.32,50.45" fill="#bbb"/></svg>
<div class="r" style="left:358.80px;top:31.40px;width:6.40px;height:0.70px;background:#cfcfcf;"></div>
<div class="r" style="left:359.40px;top:33.10px;width:5.20px;height:0.70px;background:#cfcfcf;"></div>
<div class="r" style="left:368.80px;top:32.80px;width:6.40px;height:0.70px;background:#cfcfcf;"></div>
<div class="r" style="left:369.40px;top:34.50px;width:5.20px;height:0.70px;background:#cfcfcf;"></div>
<div class="r" style="left:379.40px;top:34.20px;width:6.40px;height:0.70px;background:#cfcfcf;"></div>
<div class="r" style="left:380.00px;top:35.90px;width:5.20px;height:0.70px;background:#cfcfcf;"></div>
<div class="r" style="left:389.70px;top:28.60px;width:0.50px;height:10.00px;background:#ebebeb;"></div>
<svg style="left:393.4px;top:29.6px" width="8" height="8"><path d="M0.6 6.6 L4.8 2.4 M1.6 3 L4.4 5.8 M2.8 1.8 L5.6 4.6" stroke="#c0c0c0" stroke-width="0.7" fill="none"/><path d="M4.6 1.4 L7 3.8" stroke="#c7c7c7" stroke-width="0.7"/></svg>
<svg style="left:0;top:0" width="750" height="600"><polygon points="402.40,33.25 404.64,33.25 403.52,34.55" fill="#c2c2c2"/></svg>
<div class="r" style="left:358.80px;top:47.40px;width:5.40px;height:0.70px;background:#cfcfcf;"></div>
<div class="r" style="left:358.80px;top:49.10px;width:4.00px;height:0.70px;background:#cfcfcf;"></div>
<div class="r" style="left:358.80px;top:50.80px;width:5.40px;height:0.70px;background:#cfcfcf;"></div>
<div class="r" style="left:369.20px;top:47.40px;width:5.40px;height:0.70px;background:#cfcfcf;"></div>
<div class="r" style="left:370.00px;top:49.10px;width:4.00px;height:0.70px;background:#cfcfcf;"></div>
<div class="r" style="left:369.20px;top:50.80px;width:5.40px;height:0.70px;background:#cfcfcf;"></div>
<div class="r" style="left:380.20px;top:47.40px;width:5.40px;height:0.70px;background:#cfcfcf;"></div>
<div class="r" style="left:381.60px;top:49.10px;width:4.00px;height:0.70px;background:#cfcfcf;"></div>
<div class="r" style="left:380.20px;top:50.80px;width:5.40px;height:0.70px;background:#cfcfcf;"></div>
<div class="r" style="left:389.70px;top:44.60px;width:0.50px;height:10.00px;background:#ebebeb;"></div>
<div class="r" style="left:396.60px;top:47.40px;width:4.40px;height:0.70px;background:#c6c6c6;"></div>
<div class="r" style="left:398.00px;top:49.10px;width:3.00px;height:0.70px;background:#c6c6c6;"></div>
<div class="r" style="left:396.60px;top:50.80px;width:4.40px;height:0.70px;background:#c6c6c6;"></div>
<span class="t" style="left:393.20px;top:48px;font-size:4.6px;line-height:4.6px;color:#bdbdbd;">←</span>
<div class="r" style="left:407.40px;top:47.40px;width:4.40px;height:0.70px;background:#c6c6c6;"></div>
<div class="r" style="left:408.80px;top:49.10px;width:3.00px;height:0.70px;background:#c6c6c6;"></div>
<div class="r" style="left:407.40px;top:50.80px;width:4.40px;height:0.70px;background:#c6c6c6;"></div>
<span class="t" style="left:403.80px;top:48px;font-size:4.6px;line-height:4.6px;color:#bdbdbd;">→</span>
<div class="r" style="left:415.00px;top:25.60px;width:0.50px;height:32.00px;background:#ebebeb;"></div>
<div class="r" style="left:418.20px;top:32.00px;width:5.20px;height:0.70px;background:#c4c4c4;"></div>
<div class="r" style="left:418.20px;top:33.70px;width:3.60px;height:0.70px;background:#c4c4c4;"></div>
<div class="r" style="left:418.20px;top:35.40px;width:5.20px;height:0.70px;background:#c4c4c4;"></div>
<div class="r" style="left:418.20px;top:37.10px;width:3.60px;height:0.70px;background:#c4c4c4;"></div>
<span class="t" style="left:423.60px;top:34px;font-size:4.4px;line-height:4.4px;color:#c2c2c2;">P</span>
<span class="t" style="left:427.60px;top:34px;font-size:6.3px;line-height:6.3px;color:#b1b1b1;letter-spacing:-0.221px;transform:scaleX(0.9386);transform-origin:0 50%;">Wrap Text</span>
<div class="r" style="left:418.00px;top:46.40px;width:7.00px;height:7.00px;border:0.5px solid #c8c8c8;background-image:linear-gradient(#d0d0d0 0.5px,transparent 0.5px);background-size:3px 2.3px;"></div>
<span class="t" style="left:427.60px;top:49px;font-size:6.3px;line-height:6.3px;color:#b1b1b1;letter-spacing:-0.221px;transform:scaleX(0.9936);transform-origin:0 50%;">Merge &amp; Center</span>
<svg style="left:0;top:0" width="750" height="600"><polygon points="472.17,49.88 474.68,49.88 473.43,51.32" fill="#666"/></svg>
<div class="r" style="left:480.70px;top:30.00px;width:60.00px;height:9.30px;background:#fdfdfd;border:0.5px solid #e9e9e9;"></div>
<span class="t" style="left:482.20px;top:33px;font-size:6.3px;line-height:6.3px;color:#b9b9b9;letter-spacing:-0.221px;transform:scaleX(0.9011);transform-origin:0 50%;">General</span>
<svg style="left:0;top:0" width="750" height="600"><polygon points="536.20,34.15 538.44,34.15 537.32,35.45" fill="#bbb"/></svg>
<span class="t" style="left:483.60px;top:48px;font-size:6.6px;line-height:6.6px;color:#adadad;">$</span>
<svg style="left:0;top:0" width="750" height="600"><polygon points="491.40,49.25 493.64,49.25 492.52,50.55" fill="#bbb"/></svg>
<span class="t" style="left:498.00px;top:48px;font-size:6.4px;line-height:6.4px;color:#b4b4b4;">%</span>
<span class="t" style="left:510.40px;top:46px;font-size:7.5px;line-height:7.5px;color:#9a9a9a;font-weight:bold;">,</span>
<div class="r" style="left:519.30px;top:44.60px;width:0.50px;height:10.00px;background:#ebebeb;"></div>
<span class="t" style="left:523.20px;top:47px;font-size:3.4px;line-height:3.4px;color:#aaa;">←.0</span>
<span class="t" style="left:524.00px;top:51px;font-size:3.2px;line-height:3.2px;color:#b5b5b5;">.00</span>
<span class="t" style="left:533.80px;top:47px;font-size:3.2px;line-height:3.2px;color:#b5b5b5;">.00</span>
<span class="t" style="left:533.00px;top:51px;font-size:3.4px;line-height:3.4px;color:#aaa;">→.0</span>
<div class="r" style="left:556.00px;top:28.70px;width:13.00px;height:10.60px;background:#f7f5f7;border:0.5px solid #d4d0d4;background-image:linear-gradient(#e0dce0 0.5px,transparent 0.5px),linear-gradient(90deg,#e0dce0 0.5px,transparent 0.5px);background-size:3.1px 2.7px;"></div>
<div class="r" style="left:560.40px;top:29.40px;width:2.80px;height:9.00px;background:#c9c3c9;"></div>
<div class="r" style="left:563.80px;top:31.80px;width:2.00px;height:2.40px;background:#a9a3a9;"></div>
<div class="r" style="left:563.40px;top:36.40px;width:6.60px;height:5.00px;background:#faf8fa;border:0.5px solid #bdb9bd;"></div>
<span class="t" style="left:565.40px;top:38px;font-size:3.6px;line-height:3.6px;color:#999;">≠</span>
<span class="t" style="left:547.30px;top:46px;font-size:6.3px;line-height:6.3px;color:#a9a9a9;letter-spacing:-0.165px;">Conditional</span>
<span class="t" style="left:546.00px;top:54px;font-size:6.3px;line-height:6.3px;color:#a9a9a9;letter-spacing:-0.141px;">Formatting</span>
<svg style="left:0;top:0" width="750" height="600"><polygon points="575.80,54.95 578.04,54.95 576.92,56.25" fill="#bbb"/></svg>
<div class="r" style="left:587.30px;top:28.70px;width:13.00px;height:10.60px;background:#f7f5f7;border:0.5px solid #d4d0d4;background-image:linear-gradient(#e0dce0 0.5px,transparent 0.5px),linear-gradient(90deg,#e0dce0 0.5px,transparent 0.5px);background-size:3.1px 2.7px;"></div>
<div class="r" style="left:590.60px;top:31.40px;width:8.00px;height:7.60px;background:#dbd7db;"></div>
<svg style="left:591px;top:30px" width="11" height="12"><path d="M9.6 1.4 L4 9 L2.6 10.6 L5 9.6 L10.4 2.2 Z" fill="#b9b4b9"/><path d="M2 11 L4.6 9.8" stroke="#8d888d" stroke-width="0.9"/></svg>
<span class="t" style="left:581.00px;top:46px;font-size:6.3px;line-height:6.3px;color:#a9a9a9;letter-spacing:-0.221px;transform:scaleX(0.9371);transform-origin:0 50%;">Format as</span>
<span class="t" style="left:585.00px;top:54px;font-size:6.3px;line-height:6.3px;color:#a9a9a9;letter-spacing:-0.221px;transform:scaleX(0.8866);transform-origin:0 50%;">Table</span>
<svg style="left:0;top:0" width="750" height="600"><polygon points="599.80,54.95 602.04,54.95 600.92,56.25" fill="#bbb"/></svg>
<div class="r" style="left:607.70px;top:26.70px;width:118.00px;height:29.30px;background:#ffffff;border:0.6px solid #dcdcdc;"></div>
<div class="r" style="left:717.30px;top:26.70px;width:0.50px;height:29.30px;background:#e2e2e2;"></div>
<div class="r" style="left:610.00px;top:28.30px;width:50.70px;height:10.40px;background:#f5f1f5;"></div>
<div class="r" style="left:610.00px;top:43.30px;width:50.70px;height:10.40px;background:#e2dee2;"></div>
<div class="r" style="left:664.40px;top:28.30px;width:50.90px;height:10.40px;background:#e2dee2;"></div>
<div class="r" style="left:664.40px;top:43.30px;width:50.90px;height:10.40px;background:#e2dee2;"></div>
<span class="t" style="left:612.00px;top:30px;font-size:7.3px;line-height:7.3px;color:#666666;letter-spacing:-0.086px;">Normal</span>
<span class="t" style="left:612.00px;top:45px;font-size:7.3px;line-height:7.3px;color:#9b979b;letter-spacing:-0.256px;transform:scaleX(0.9740);transform-origin:0 50%;">Good</span>
<span class="t" style="left:666.70px;top:30px;font-size:7.3px;line-height:7.3px;color:#8b878b;letter-spacing:-0.256px;transform:scaleX(0.9249);transform-origin:0 50%;">Bad</span>
<span class="t" style="left:666.70px;top:45px;font-size:7.3px;line-height:7.3px;color:#bfbbbf;letter-spacing:-0.033px;">Neutral</span>
<svg style="left:0;top:0" width="750" height="600"><polygon points="720.21,32.51 722.32,32.51 721.26,31.29" fill="#c4c4c4"/></svg>
<svg style="left:0;top:0" width="750" height="600"><polygon points="720.21,41.59 722.32,41.59 721.26,42.81" fill="#c4c4c4"/></svg>
<svg style="left:0;top:0" width="750" height="600"><polygon points="720.21,51.19 722.32,51.19 721.26,52.41" fill="#c4c4c4"/></svg>
<div class="r" style="left:720.20px;top:50.00px;width:2.60px;height:0.40px;background:#c8c8c8;"></div>
<div class="r" style="left:734.00px;top:27.60px;width:7.60px;height:3.40px;border:0.5px solid #cfcfcf;"></div>
<div class="r" style="left:737.60px;top:27.60px;width:0.50px;height:3.40px;background:#cfcfcf;"></div>
<div class="r" style="left:738.60px;top:32.20px;width:7.40px;height:2.80px;border:0.5px solid #c6c6c6;"></div>
<span class="t" style="left:732.60px;top:33px;font-size:5.4px;line-height:5.4px;color:#a3a3a3;">←</span>
<div class="r" style="left:734.00px;top:36.60px;width:7.60px;height:4.00px;border:0.5px solid #cfcfcf;"></div>
<div class="r" style="left:737.60px;top:36.60px;width:0.50px;height:4.00px;background:#cfcfcf;"></div>
<div class="r" style="left:734.00px;top:38.40px;width:7.60px;height:0.50px;background:#cfcfcf;"></div>
<span class="t" style="left:733.00px;top:46px;font-size:6.3px;line-height:6.3px;color:#a9a9a9;letter-spacing:-0.221px;transform:scaleX(0.9496);transform-origin:0 50%;">Insert</span>
<svg style="left:0;top:0" width="750" height="600"><polygon points="738.00,54.55 740.24,54.55 739.12,55.85" fill="#bbb"/></svg>
<div class="r" style="left:187.40px;top:73.00px;width:38.20px;height:9.40px;background:#fff;border:0.5px solid #e3e3e3;"></div>
<span class="t" style="left:190.00px;top:77px;font-size:5.2px;line-height:5.2px;color:#6e6e6e;letter-spacing:-0.182px;transform:scaleX(0.9516);transform-origin:0 50%;">F13</span>
<svg style="left:0;top:0" width="750" height="600"><polygon points="219.40,77.35 221.64,77.35 220.52,78.65" fill="#777"/></svg>
<div class="r" style="left:230.90px;top:75.75px;width:0.70px;height:0.70px;background:#c4c4c4;"></div>
<div class="r" style="left:230.90px;top:77.25px;width:0.70px;height:0.70px;background:#c4c4c4;"></div>
<div class="r" style="left:230.90px;top:78.75px;width:0.70px;height:0.70px;background:#c4c4c4;"></div>
<div class="r" style="left:236.60px;top:73.00px;width:40.60px;height:9.40px;background:#fff;border:0.5px solid #e3e3e3;"></div>
<svg style="left:240.6px;top:75.2px" width="6" height="6"><path d="M0.4 0.4 L4.8 4.8 M4.8 0.4 L0.4 4.8" stroke="#b3b3b3" stroke-width="0.7" fill="none"/></svg>
<svg style="left:253.6px;top:75.2px" width="8" height="6"><path d="M0.6 3 L2.6 5 L6.6 0.6" stroke="#b3b3b3" stroke-width="0.7" fill="none"/></svg>
<span class="t s" style="left:268.20px;top:74px;font-size:8px;line-height:8px;color:#4e4e4e;font-style:italic;letter-spacing:0.209px;">fx</span>
<div class="r" style="left:278.60px;top:73.00px;width:472.00px;height:9.40px;background:#fff;border:0.5px solid #e3e3e3;border-right:none;"></div>
<span class="t" style="left:283.00px;top:77px;font-size:5.1px;line-height:5.1px;color:#6a6a6a;letter-spacing:-0.178px;transform:scaleX(0.9650);transform-origin:0 50%;">=IF(H14="TBD","GAME IN PROGRESS", "TIC TAC TOE!")</span>
<div class="r" style="left:196.40px;top:94.25px;width:317.20px;height:0.55px;background:#efefef;"></div>
<div class="r" style="left:196.40px;top:101.75px;width:317.20px;height:0.55px;background:#efefef;"></div>
<div class="r" style="left:196.40px;top:109.25px;width:317.20px;height:0.55px;background:#efefef;"></div>
<div class="r" style="left:196.40px;top:116.75px;width:317.20px;height:0.55px;background:#efefef;"></div>
<div class="r" style="left:196.40px;top:124.25px;width:317.20px;height:0.55px;background:#efefef;"></div>
<div class="r" style="left:196.40px;top:131.75px;width:317.20px;height:0.55px;background:#efefef;"></div>
<div class="r" style="left:196.40px;top:139.35px;width:317.20px;height:0.55px;background:#efefef;"></div>
<div class="r" style="left:196.40px;top:147.15px;width:317.20px;height:0.55px;background:#efefef;"></div>
<div class="r" style="left:196.40px;top:154.75px;width:317.20px;height:0.55px;background:#efefef;"></div>
<div class="r" style="left:196.40px;top:162.35px;width:317.20px;height:0.55px;background:#efefef;"></div>
<div class="r" style="left:196.40px;top:169.95px;width:317.20px;height:0.55px;background:#efefef;"></div>
<div class="r" style="left:196.40px;top:177.75px;width:317.20px;height:0.55px;background:#efefef;"></div>
<div class="r" style="left:196.40px;top:185.15px;width:317.20px;height:0.55px;background:#efefef;"></div>
<div class="r" style="left:196.40px;top:196.35px;width:317.20px;height:0.55px;background:#efefef;"></div>
<div class="r" style="left:196.40px;top:207.15px;width:317.20px;height:0.55px;background:#efefef;"></div>
<div class="r" style="left:196.40px;top:215.15px;width:317.20px;height:0.55px;background:#efefef;"></div>
<div class="r" style="left:196.40px;top:222.55px;width:317.20px;height:0.55px;background:#efefef;"></div>
<div class="r" style="left:196.40px;top:243.55px;width:317.20px;height:0.55px;background:#efefef;"></div>
<div class="r" style="left:196.40px;top:264.55px;width:317.20px;height:0.55px;background:#efefef;"></div>
<div class="r" style="left:196.40px;top:285.15px;width:317.20px;height:0.55px;background:#efefef;"></div>
<div class="r" style="left:196.40px;top:291.15px;width:317.20px;height:0.55px;background:#efefef;"></div>
<div class="r" style="left:196.40px;top:311.55px;width:317.20px;height:0.55px;background:#efefef;"></div>
<div class="r" style="left:196.40px;top:332.55px;width:317.20px;height:0.55px;background:#efefef;"></div>
<div class="r" style="left:196.40px;top:339.95px;width:317.20px;height:0.55px;background:#efefef;"></div>
<div class="r" style="left:196.40px;top:347.35px;width:317.20px;height:0.55px;background:#efefef;"></div>
<div class="r" style="left:196.40px;top:354.75px;width:317.20px;height:0.55px;background:#efefef;"></div>
<div class="r" style="left:196.40px;top:362.05px;width:317.20px;height:0.55px;background:#efefef;"></div>
<div class="r" style="left:196.40px;top:369.35px;width:317.20px;height:0.55px;background:#efefef;"></div>
<div class="r" style="left:196.15px;top:88.00px;width:0.55px;height:281.60px;background:#efefef;"></div>
<div class="r" style="left:261.35px;top:88.00px;width:0.55px;height:281.60px;background:#efefef;"></div>
<div class="r" style="left:280.35px;top:88.00px;width:0.55px;height:281.60px;background:#efefef;"></div>
<div class="r" style="left:316.55px;top:88.00px;width:0.55px;height:281.60px;background:#efefef;"></div>
<div class="r" style="left:334.85px;top:88.00px;width:0.55px;height:281.60px;background:#efefef;"></div>
<div class="r" style="left:353.35px;top:88.00px;width:0.55px;height:281.60px;background:#efefef;"></div>
<div class="r" style="left:378.35px;top:88.00px;width:0.55px;height:281.60px;background:#efefef;"></div>
<div class="r" style="left:406.35px;top:88.00px;width:0.55px;height:281.60px;background:#efefef;"></div>
<div class="r" style="left:463.15px;top:88.00px;width:0.55px;height:281.60px;background:#efefef;"></div>
<div class="r" style="left:513.35px;top:88.00px;width:0.55px;height:281.60px;background:#efefef;"></div>
<div class="r" style="left:196.15px;top:88.00px;width:0.55px;height:281.60px;background:#cfcfcf;"></div>
<div class="r" style="left:353.60px;top:88.00px;width:109.80px;height:6.40px;background:#dfe6e1;border-bottom:0.7px solid #86b39b;"></div>
<div class="r" style="left:378.40px;top:88.60px;width:0.50px;height:5.20px;background:#cfd4cf;"></div>
<div class="r" style="left:406.40px;top:88.60px;width:0.50px;height:5.20px;background:#cfd4cf;"></div>
<span class="t" style="left:227.40px;top:90px;font-size:5.2px;line-height:5.2px;color:#7b7b7b;">A</span>
<span class="t" style="left:269.40px;top:90px;font-size:5.2px;line-height:5.2px;color:#7b7b7b;">B</span>
<span class="t" style="left:297.00px;top:90px;font-size:5.2px;line-height:5.2px;color:#7b7b7b;">C</span>
<span class="t" style="left:324.20px;top:90px;font-size:5.2px;line-height:5.2px;color:#7b7b7b;">D</span>
<span class="t" style="left:342.60px;top:90px;font-size:5.2px;line-height:5.2px;color:#7b7b7b;">E</span>
<span class="t" style="left:486.80px;top:90px;font-size:5.2px;line-height:5.2px;color:#7b7b7b;">I</span>
<span class="t" style="left:364.50px;top:90px;font-size:5px;line-height:5px;color:#2f6e4c;font-weight:bold;">F</span>
<span class="t" style="left:391.10px;top:90px;font-size:5px;line-height:5px;color:#2f6e4c;font-weight:bold;">G</span>
<span class="t" style="left:433.10px;top:90px;font-size:5px;line-height:5px;color:#2f6e4c;font-weight:bold;">H</span>
<svg style="left:191.6px;top:89.8px" width="4.4" height="4.4"><path d="M4 0.4 V4 H0.4 Z" fill="#c9c9c9"/></svg>
<div class="r" style="left:186.40px;top:185.60px;width:10.00px;height:11.00px;background:#e3e8e3;border-right:0.8px solid #8fbaa2;"></div>
<span class="t" style="left:190.05px;top:97px;font-size:5.3px;line-height:5.3px;color:#7c7c7c;letter-spacing:-0.053px;">1</span>
<span class="t" style="left:190.05px;top:105px;font-size:5.3px;line-height:5.3px;color:#7c7c7c;letter-spacing:-0.053px;">2</span>
<span class="t" style="left:190.05px;top:112px;font-size:5.3px;line-height:5.3px;color:#7c7c7c;letter-spacing:-0.053px;">3</span>
<span class="t" style="left:190.05px;top:120px;font-size:5.3px;line-height:5.3px;color:#7c7c7c;letter-spacing:-0.053px;">4</span>
<span class="t" style="left:190.05px;top:127px;font-size:5.3px;line-height:5.3px;color:#7c7c7c;letter-spacing:-0.053px;">5</span>
<span class="t" style="left:190.05px;top:135px;font-size:5.3px;line-height:5.3px;color:#7c7c7c;letter-spacing:-0.053px;">6</span>
<span class="t" style="left:190.05px;top:143px;font-size:5.3px;line-height:5.3px;color:#7c7c7c;letter-spacing:-0.053px;">7</span>
<span class="t" style="left:190.05px;top:150px;font-size:5.3px;line-height:5.3px;color:#7c7c7c;letter-spacing:-0.053px;">8</span>
<span class="t" style="left:190.05px;top:158px;font-size:5.3px;line-height:5.3px;color:#7c7c7c;letter-spacing:-0.053px;">9</span>
<span class="t" style="left:188.60px;top:165px;font-size:5.3px;line-height:5.3px;color:#7c7c7c;letter-spacing:-0.053px;">10</span>
<span class="t" style="left:188.60px;top:173px;font-size:5.3px;line-height:5.3px;color:#7c7c7c;letter-spacing:-0.053px;">11</span>
<span class="t" style="left:188.60px;top:181px;font-size:5.3px;line-height:5.3px;color:#7c7c7c;letter-spacing:-0.053px;">12</span>
<span class="t" style="left:188.60px;top:192px;font-size:5.3px;line-height:5.3px;color:#3f7f5c;font-weight:bold;letter-spacing:-0.053px;">13</span>
<span class="t" style="left:188.60px;top:203px;font-size:5.3px;line-height:5.3px;color:#7c7c7c;letter-spacing:-0.053px;">14</span>
<span class="t" style="left:188.60px;top:211px;font-size:5.3px;line-height:5.3px;color:#7c7c7c;letter-spacing:-0.053px;">15</span>
<span class="t" style="left:188.60px;top:218px;font-size:5.3px;line-height:5.3px;color:#7c7c7c;letter-spacing:-0.053px;">16</span>
<span class="t" style="left:188.60px;top:239px;font-size:5.3px;line-height:5.3px;color:#7c7c7c;letter-spacing:-0.053px;">17</span>
<span class="t" style="left:188.60px;top:260px;font-size:5.3px;line-height:5.3px;color:#7c7c7c;letter-spacing:-0.053px;">18</span>
<span class="t" style="left:188.60px;top:281px;font-size:5.3px;line-height:5.3px;color:#7c7c7c;letter-spacing:-0.053px;">19</span>
<span class="t" style="left:188.60px;top:287px;font-size:5.3px;line-height:5.3px;color:#7c7c7c;letter-spacing:-0.053px;">20</span>
<span class="t" style="left:188.60px;top:307px;font-size:5.3px;line-height:5.3px;color:#7c7c7c;letter-spacing:-0.053px;">21</span>
<span class="t" style="left:188.60px;top:328px;font-size:5.3px;line-height:5.3px;color:#7c7c7c;letter-spacing:-0.053px;">22</span>
<span class="t" style="left:188.60px;top:335px;font-size:5.3px;line-height:5.3px;color:#7c7c7c;letter-spacing:-0.053px;">23</span>
<span class="t" style="left:188.60px;top:343px;font-size:5.3px;line-height:5.3px;color:#7c7c7c;letter-spacing:-0.053px;">24</span>
<span class="t" style="left:188.60px;top:350px;font-size:5.3px;line-height:5.3px;color:#7c7c7c;letter-spacing:-0.053px;">25</span>
<span class="t" style="left:188.60px;top:357px;font-size:5.3px;line-height:5.3px;color:#7c7c7c;letter-spacing:-0.053px;">26</span>
<span class="t" style="left:188.60px;top:365px;font-size:5.3px;line-height:5.3px;color:#7c7c7c;letter-spacing:-0.053px;">27</span>
<div class="r" style="left:196.00px;top:139.20px;width:139.50px;height:31.00px;background:#eeeeee;border-top:0.8px solid #8a8a8a;border-left:0.8px solid #8a8a8a;border-right:1px solid #5d5d5d;border-bottom:1.3px solid #4f4f4f;"></div>
<span class="t s" style="left:198.00px;top:142px;font-size:6.9px;line-height:6.9px;color:#1e1e1e;font-weight:bold;letter-spacing:0.146px;">Column Count</span>
<span class="t" style="left:262.60px;top:151px;font-size:5.3px;line-height:5.3px;color:#565656;letter-spacing:-0.185px;transform:scaleX(0.9309);transform-origin:0 50%;">C1</span>
<span class="t" style="left:281.60px;top:151px;font-size:5.3px;line-height:5.3px;color:#565656;letter-spacing:-0.185px;transform:scaleX(0.9309);transform-origin:0 50%;">C2</span>
<span class="t" style="left:318.60px;top:151px;font-size:5.3px;line-height:5.3px;color:#565656;letter-spacing:-0.185px;transform:scaleX(0.9309);transform-origin:0 50%;">C3</span>
<span class="t" style="left:197.40px;top:158px;font-size:5.3px;line-height:5.3px;color:#565656;letter-spacing:-0.185px;transform:scaleX(0.9286);transform-origin:0 50%;">X</span>
<span class="t" style="left:197.40px;top:165px;font-size:5.3px;line-height:5.3px;color:#565656;letter-spacing:-0.185px;transform:scaleX(0.9214);transform-origin:0 50%;">O</span>
<span class="t" style="left:262.80px;top:158px;font-size:5.3px;line-height:5.3px;color:#565656;letter-spacing:-0.185px;transform:scaleX(0.9390);transform-origin:0 50%;">0</span>
<span class="t" style="left:281.80px;top:158px;font-size:5.3px;line-height:5.3px;color:#565656;letter-spacing:-0.185px;transform:scaleX(0.9390);transform-origin:0 50%;">0</span>
<span class="t" style="left:318.80px;top:158px;font-size:5.3px;line-height:5.3px;color:#565656;letter-spacing:-0.185px;transform:scaleX(0.9390);transform-origin:0 50%;">0</span>
<span class="t" style="left:262.80px;top:165px;font-size:5.3px;line-height:5.3px;color:#565656;letter-spacing:-0.185px;transform:scaleX(0.9390);transform-origin:0 50%;">0</span>
<span class="t" style="left:281.80px;top:165px;font-size:5.3px;line-height:5.3px;color:#565656;letter-spacing:-0.185px;transform:scaleX(0.9390);transform-origin:0 50%;">0</span>
<span class="t" style="left:318.80px;top:165px;font-size:5.3px;line-height:5.3px;color:#565656;letter-spacing:-0.185px;transform:scaleX(0.9390);transform-origin:0 50%;">0</span>
<div class="r" style="left:353.20px;top:94.20px;width:110.50px;height:38.20px;background:#eeeeee;border-top:0.8px solid #71897b;border-left:0.8px solid #7b8f84;border-right:1px solid #66776d;border-bottom:1.3px solid #5a6a60;"></div>
<span class="t s" style="left:355.60px;top:97px;font-size:6.9px;line-height:6.9px;color:#1e1e1e;font-weight:bold;letter-spacing:-0.242px;transform:scaleX(0.9827);transform-origin:0 50%;">Row Count</span>
<span class="t" style="left:379.40px;top:105px;font-size:5.3px;line-height:5.3px;color:#565656;letter-spacing:-0.185px;transform:scaleX(0.9286);transform-origin:0 50%;">X</span>
<span class="t" style="left:407.60px;top:105px;font-size:5.3px;line-height:5.3px;color:#565656;letter-spacing:-0.185px;transform:scaleX(0.9214);transform-origin:0 50%;">O</span>
<span class="t" style="left:355.00px;top:112px;font-size:5.3px;line-height:5.3px;color:#565656;letter-spacing:-0.185px;transform:scaleX(0.9309);transform-origin:0 50%;">R1</span>
<span class="t" style="left:379.40px;top:112px;font-size:5.3px;line-height:5.3px;color:#565656;letter-spacing:-0.185px;transform:scaleX(0.9390);transform-origin:0 50%;">0</span>
<span class="t" style="left:407.60px;top:112px;font-size:5.3px;line-height:5.3px;color:#565656;letter-spacing:-0.185px;transform:scaleX(0.9390);transform-origin:0 50%;">0</span>
<span class="t" style="left:355.00px;top:120px;font-size:5.3px;line-height:5.3px;color:#565656;letter-spacing:-0.185px;transform:scaleX(0.9309);transform-origin:0 50%;">R2</span>
<span class="t" style="left:379.40px;top:120px;font-size:5.3px;line-height:5.3px;color:#565656;letter-spacing:-0.185px;transform:scaleX(0.9390);transform-origin:0 50%;">0</span>
<span class="t" style="left:407.60px;top:120px;font-size:5.3px;line-height:5.3px;color:#565656;letter-spacing:-0.185px;transform:scaleX(0.9390);transform-origin:0 50%;">0</span>
<span class="t" style="left:355.00px;top:127px;font-size:5.3px;line-height:5.3px;color:#565656;letter-spacing:-0.185px;transform:scaleX(0.9309);transform-origin:0 50%;">R3</span>
<span class="t" style="left:379.40px;top:127px;font-size:5.3px;line-height:5.3px;color:#565656;letter-spacing:-0.185px;transform:scaleX(0.9390);transform-origin:0 50%;">0</span>
<span class="t" style="left:407.60px;top:127px;font-size:5.3px;line-height:5.3px;color:#565656;letter-spacing:-0.185px;transform:scaleX(0.9390);transform-origin:0 50%;">0</span>
<div class="r" style="left:377.40px;top:147.20px;width:86.30px;height:23.40px;background:#eeeeee;border-top:0.8px solid #8a8a8a;border-left:0.8px solid #8a8a8a;border-right:1px solid #5d5d5d;border-bottom:1.3px solid #4f4f4f;"></div>
<span class="t s" style="left:379.60px;top:150px;font-size:6.9px;line-height:6.9px;color:#1e1e1e;font-weight:bold;letter-spacing:-0.242px;transform:scaleX(0.9959);transform-origin:0 50%;">Win Tally</span>
<span class="t" style="left:379.40px;top:159px;font-size:5.3px;line-height:5.3px;color:#565656;letter-spacing:-0.185px;transform:scaleX(0.9286);transform-origin:0 50%;">X</span>
<span class="t" style="left:379.40px;top:165px;font-size:5.3px;line-height:5.3px;color:#565656;letter-spacing:-0.185px;transform:scaleX(0.9214);transform-origin:0 50%;">O</span>
<span class="t" style="left:459.60px;top:159px;font-size:5.3px;line-height:5.3px;color:#565656;letter-spacing:-0.185px;transform:scaleX(0.9390);transform-origin:0 50%;">0</span>
<span class="t" style="left:459.60px;top:165px;font-size:5.3px;line-height:5.3px;color:#565656;letter-spacing:-0.185px;transform:scaleX(0.9390);transform-origin:0 50%;">0</span>
<div class="r" style="left:196.00px;top:184.80px;width:139.50px;height:148.00px;background:#eeeeee;border-top:0.8px solid #8a8a8a;border-left:0.8px solid #8a8a8a;border-right:1px solid #5d5d5d;border-bottom:1.3px solid #4f4f4f;"></div>
<span class="t s" style="left:198.00px;top:190px;font-size:6.9px;line-height:6.9px;color:#1e1e1e;font-weight:bold;letter-spacing:0.033px;">Diagonal Count</span>
<span class="t" style="left:197.60px;top:202px;font-size:5.4px;line-height:5.4px;color:#565656;letter-spacing:-0.188px;">Transpose Left Diagonal</span>
<span class="t" style="left:197.60px;top:210px;font-size:5.4px;line-height:5.4px;color:#565656;letter-spacing:-0.189px;transform:scaleX(0.9932);transform-origin:0 50%;">Transpose Right Diagonal</span>
<span class="t" style="left:276.60px;top:202px;font-size:5.3px;line-height:5.3px;color:#565656;letter-spacing:-0.185px;transform:scaleX(0.9390);transform-origin:0 50%;">0</span>
<span class="t" style="left:313.20px;top:202px;font-size:5.3px;line-height:5.3px;color:#565656;letter-spacing:-0.185px;transform:scaleX(0.9390);transform-origin:0 50%;">0</span>
<span class="t" style="left:332.00px;top:202px;font-size:5.3px;line-height:5.3px;color:#565656;letter-spacing:-0.185px;transform:scaleX(0.9390);transform-origin:0 50%;">0</span>
<span class="t" style="left:276.60px;top:211px;font-size:5.3px;line-height:5.3px;color:#565656;letter-spacing:-0.185px;transform:scaleX(0.9390);transform-origin:0 50%;">0</span>
<span class="t" style="left:313.20px;top:211px;font-size:5.3px;line-height:5.3px;color:#565656;letter-spacing:-0.185px;transform:scaleX(0.9390);transform-origin:0 50%;">0</span>
<span class="t" style="left:332.00px;top:211px;font-size:5.3px;line-height:5.3px;color:#565656;letter-spacing:-0.185px;transform:scaleX(0.9390);transform-origin:0 50%;">0</span>
<span class="t s" style="left:246.00px;top:238px;font-size:6.9px;line-height:6.9px;color:#1e1e1e;font-weight:bold;letter-spacing:0.079px;">Count Diagonals</span>
<span class="t" style="left:276.20px;top:260px;font-size:5.3px;line-height:5.3px;color:#565656;letter-spacing:-0.185px;transform:scaleX(0.9286);transform-origin:0 50%;">X</span>
<span class="t" style="left:312.20px;top:260px;font-size:5.8px;line-height:5.8px;color:#565656;letter-spacing:-0.203px;transform:scaleX(0.9214);transform-origin:0 50%;">O</span>
<span class="t" style="left:276.60px;top:281px;font-size:5.3px;line-height:5.3px;color:#565656;letter-spacing:-0.185px;transform:scaleX(0.9390);transform-origin:0 50%;">0</span>
<span class="t" style="left:313.20px;top:281px;font-size:5.3px;line-height:5.3px;color:#565656;letter-spacing:-0.185px;transform:scaleX(0.9390);transform-origin:0 50%;">0</span>
<span class="t" style="left:276.60px;top:287px;font-size:5.3px;line-height:5.3px;color:#565656;letter-spacing:-0.185px;transform:scaleX(0.9390);transform-origin:0 50%;">0</span>
<span class="t" style="left:313.20px;top:287px;font-size:5.3px;line-height:5.3px;color:#565656;letter-spacing:-0.185px;transform:scaleX(0.9390);transform-origin:0 50%;">0</span>
<div class="r" style="left:353.40px;top:185.60px;width:110.00px;height:10.60px;background:linear-gradient(90deg,#fbe2d2,#f6e9df);border:0.9px solid #5f9b7a;"></div>
<span class="t s" style="left:365.40px;top:187px;font-size:9px;line-height:9px;color:#2a2a2a;font-weight:bold;letter-spacing:-0.315px;transform:scaleX(0.9887);transform-origin:0 50%;">GAME IN PROGRESS</span>
<span class="t s" style="left:361.00px;top:199px;font-size:10.2px;line-height:10.2px;color:#262626;font-weight:bold;letter-spacing:0.229px;">Winner:</span>
<div class="r" style="left:353.20px;top:222.20px;width:110.50px;height:63.60px;background:#d6dce5;border-top:0.8px solid #6a6a6a;border-left:0.8px solid #6a6a6a;border-right:1px solid #555;border-bottom:1.3px solid #555;"></div>
<div class="r" style="left:352.00px;top:340.80px;width:4.00px;height:6.40px;background:#fff;"></div>
<div class="r" style="left:352.00px;top:348.20px;width:4.00px;height:6.40px;background:#fff;"></div>
<span class="t" style="left:336.40px;top:343px;font-size:5.3px;line-height:5.3px;color:#565656;letter-spacing:-0.185px;transform:scaleX(0.9797);transform-origin:0 50%;">Tic Tac Toe.xlsm</span>
<span class="t" style="left:336.40px;top:350px;font-size:5.3px;line-height:5.3px;color:#565656;letter-spacing:-0.150px;">George J. Mount</span>
<div class="r" style="left:434.20px;top:176.80px;width:235.00px;height:110.20px;background:#d4d0c8;border:0.7px solid #8e8b85;border-top-color:#e9e7e2;border-left-color:#e9e7e2;border-right-color:#6a6762;border-bottom-color:#6a6762;"></div>
<div class="r" style="left:435.00px;top:177.40px;width:233.40px;height:10.20px;background:linear-gradient(90deg,#0b1f6e 0%,#0d2a8a 35%,#1858c8 70%,#2b86ee 100%);"></div>
<span class="t" style="left:435.80px;top:181px;font-size:6.6px;line-height:6.6px;color:#f2f4fb;letter-spacing:-0.231px;transform:scaleX(0.9027);transform-origin:0 50%;">Conditional Formatting Rules Manager</span>
<div class="r" style="left:634.20px;top:178.40px;width:15.40px;height:7.80px;background:#d4d0c8;border:0.6px solid #fff;border-right-color:#4c4a46;border-bottom-color:#4c4a46;"></div>
<span class="t" style="left:639.20px;top:179px;font-size:8px;line-height:8px;color:#1a1a1a;font-weight:bold;">?</span>
<div class="r" style="left:651.20px;top:178.40px;width:15.80px;height:7.80px;background:#d4d0c8;border:0.6px solid #fff;border-right-color:#4c4a46;border-bottom-color:#4c4a46;"></div>
<svg style="left:656.2px;top:179.8px" width="6" height="5.2"><path d="M0.4 0.4 L5.4 4.8 M5.4 0.4 L0.4 4.8" stroke="#222" stroke-width="1.1" fill="none"/></svg>
<span class="t" style="left:437.60px;top:192px;font-size:5px;line-height:5px;color:#5a5a5a;letter-spacing:-0.175px;transform:scaleX(0.9615);transform-origin:0 50%;">Show formatting rules for:</span>
<div class="r" style="left:438.00px;top:195.40px;width:3.40px;height:0.40px;background:#5a5a5a;"></div>
<div class="r" style="left:492.00px;top:190.40px;width:58.60px;height:7.30px;background:#fff;border:0.6px solid #6f6d69;border-right-color:#e8e6e2;border-bottom-color:#e8e6e2;"></div>
<span class="t" style="left:493.60px;top:194px;font-size:4.8px;line-height:4.8px;color:#666;letter-spacing:-0.168px;transform:scaleX(0.9472);transform-origin:0 50%;">Current Selection</span>
<div class="r" style="left:543.40px;top:190.90px;width:6.80px;height:6.40px;background:#d4d0c8;border:0.6px solid #fff;border-right-color:#4c4a46;border-bottom-color:#4c4a46;"></div>
<svg style="left:0;top:0" width="750" height="600"><polygon points="545.17,193.48 547.68,193.48 546.43,194.92" fill="#222"/></svg>
<div class="r" style="left:438.00px;top:200.00px;width:227.60px;height:9.50px;background:#fdfdfc;border:0.5px solid #e6e4df;"></div>
<div class="r" style="left:441.00px;top:202.00px;width:5.60px;height:4.80px;background:#f2f2f2;border:0.5px solid #b9b9b9;"></div>
<span class="t" style="left:448.00px;top:203px;font-size:5px;line-height:5px;color:#5a5a5a;letter-spacing:-0.175px;transform:scaleX(0.9198);transform-origin:0 50%;">New Rule...</span>
<div class="r" style="left:448.20px;top:207.00px;width:3.20px;height:0.40px;background:#5a5a5a;"></div>
<div class="r" style="left:481.00px;top:201.80px;width:5.60px;height:5.20px;background:#e9eef5;border:0.5px solid #8ea3bf;"></div>
<div class="r" style="left:484.00px;top:204.60px;width:3.20px;height:2.60px;background:#9db3cf;"></div>
<span class="t" style="left:488.40px;top:203px;font-size:5px;line-height:5px;color:#5a5a5a;letter-spacing:-0.175px;transform:scaleX(0.8941);transform-origin:0 50%;">Edit Rule...</span>
<div class="r" style="left:488.60px;top:207.00px;width:2.80px;height:0.40px;background:#5a5a5a;"></div>
<svg style="left:520px;top:201.8px" width="6" height="6"><path d="M0.4 0.4 L5 5.2 M5 0.4 L0.4 5.2" stroke="#2a2a2a" stroke-width="0.9" fill="none"/></svg>
<span class="t" style="left:527.00px;top:203px;font-size:5px;line-height:5px;color:#5a5a5a;letter-spacing:-0.175px;transform:scaleX(0.9085);transform-origin:0 50%;">Delete Rule</span>
<div class="r" style="left:527.20px;top:207.00px;width:3.20px;height:0.40px;background:#5a5a5a;"></div>
<svg style="left:0;top:0" width="750" height="600"><polygon points="558.76,205.56 561.40,205.56 560.08,204.04" fill="#c4c4c4"/></svg>
<svg style="left:0;top:0" width="750" height="600"><polygon points="571.76,204.04 574.40,204.04 573.08,205.56" fill="#c4c4c4"/></svg>
<div class="r" style="left:438.00px;top:210.60px;width:227.60px;height:62.20px;background:#d4d0c8;border:0.7px solid #5f5d59;border-right-color:#f4f3f0;border-bottom-color:#f4f3f0;"></div>
<div class="r" style="left:438.80px;top:216.60px;width:218.60px;height:55.60px;background:#ffffff;"></div>
<div class="r" style="left:657.60px;top:210.40px;width:8.20px;height:62.00px;background:#d4d0c8;"></div>
<div class="r" style="left:438.80px;top:211.20px;width:218.40px;height:5.40px;background:#d4d0c8;border-bottom:0.6px solid #77746f;border-right:0.6px solid #77746f;"></div>
<div class="r" style="left:500.40px;top:211.20px;width:0.60px;height:5.40px;background:#77746f;"></div>
<div class="r" style="left:501.00px;top:211.20px;width:0.50px;height:5.40px;background:#f3f2ee;"></div>
<div class="r" style="left:550.20px;top:211.20px;width:0.60px;height:5.40px;background:#77746f;"></div>
<div class="r" style="left:550.80px;top:211.20px;width:0.50px;height:5.40px;background:#f3f2ee;"></div>
<div class="r" style="left:631.60px;top:211.20px;width:0.60px;height:5.40px;background:#77746f;"></div>
<div class="r" style="left:632.20px;top:211.20px;width:0.50px;height:5.40px;background:#f3f2ee;"></div>
<span class="t" style="left:439.80px;top:214px;font-size:4.9px;line-height:4.9px;color:#5a5a5a;letter-spacing:-0.172px;transform:scaleX(0.9709);transform-origin:0 50%;">Rule (applied in order shown)</span>
<span class="t" style="left:503.00px;top:214px;font-size:4.9px;line-height:4.9px;color:#5a5a5a;letter-spacing:-0.172px;transform:scaleX(0.8983);transform-origin:0 50%;">Format</span>
<span class="t" style="left:552.60px;top:214px;font-size:4.9px;line-height:4.9px;color:#5a5a5a;letter-spacing:-0.172px;transform:scaleX(0.9813);transform-origin:0 50%;">Applies to</span>
<span class="t" style="left:634.00px;top:214px;font-size:4.9px;line-height:4.9px;color:#5a5a5a;letter-spacing:-0.172px;transform:scaleX(0.9190);transform-origin:0 50%;">Stop If True</span>
<div class="r" style="left:438.80px;top:217.40px;width:218.60px;height:10.80px;background:#e6e6ef;"></div>
<span class="t" style="left:448.00px;top:222px;font-size:5px;line-height:5px;color:#5c5c5c;letter-spacing:-0.175px;transform:scaleX(0.8899);transform-origin:0 50%;">Cell Value = $F$13="GA...</span>
<div class="r" style="left:501.00px;top:217.80px;width:48.40px;height:10.00px;background:#fbe3d4;"></div>
<span class="t" style="left:511.00px;top:222px;font-size:5.2px;line-height:5.2px;color:#8a6a50;letter-spacing:-0.182px;transform:scaleX(0.9298);transform-origin:0 50%;">AaBbCcYyZz</span>
<div class="r" style="left:551.40px;top:219.30px;width:76.80px;height:7.20px;background:#fff;border:0.6px solid #6f6d69;border-right-color:#d9d7d2;border-bottom-color:#d9d7d2;"></div>
<span class="t" style="left:553.00px;top:223px;font-size:4.9px;line-height:4.9px;color:#5c5c5c;letter-spacing:-0.172px;transform:scaleX(0.9526);transform-origin:0 50%;">=$F$13:$H$14</span>
<div class="r" style="left:621.00px;top:220.00px;width:6.40px;height:5.80px;background:#d9d6cf;border:0.5px solid #8c8984;"></div>
<div class="r" style="left:622.40px;top:221.20px;width:2.60px;height:2.00px;background:#b4464a;"></div>
<div class="r" style="left:624.60px;top:223.00px;width:1.80px;height:1.80px;background:#5b6fae;"></div>
<div class="r" style="left:642.00px;top:220.00px;width:5.00px;height:5.00px;background:#fff;border:0.7px solid #6b6965;border-right-color:#e3e1dc;border-bottom-color:#e3e1dc;"></div>
<div class="r" style="left:575.60px;top:275.00px;width:28.00px;height:8.40px;background:#d4d0c8;border:0.6px solid #fff;border-right-color:#4c4a46;border-bottom-color:#4c4a46;"></div>
<div class="r" style="left:575.20px;top:274.60px;width:29.00px;height:9.40px;border:0.5px solid #4a4a4a;"></div>
<div class="r" style="left:606.00px;top:275.00px;width:28.00px;height:8.40px;background:#d4d0c8;border:0.6px solid #fff;border-right-color:#4c4a46;border-bottom-color:#4c4a46;"></div>
<div class="r" style="left:637.60px;top:275.00px;width:28.00px;height:8.40px;background:#d4d0c8;border:0.6px solid #fff;border-right-color:#4c4a46;border-bottom-color:#4c4a46;"></div>
<span class="t" style="left:587.20px;top:279px;font-size:4.9px;line-height:4.9px;color:#4c4c4c;">OK</span>
<span class="t" style="left:612.80px;top:279px;font-size:4.9px;line-height:4.9px;color:#4c4c4c;">Cancel</span>
<span class="t" style="left:645.40px;top:279px;font-size:4.9px;line-height:4.9px;color:#4c4c4c;">Apply</span>
<div class="r" style="left:186.40px;top:382.00px;width:573.60px;height:11.20px;background:#f5f5f5;border-top:0.6px solid #e4e4e4;"></div>
<svg style="left:0;top:0" width="750" height="600"><polygon points="197.07,386.15 197.07,389.05 195.31,387.60" fill="#444"/></svg>
<svg style="left:0;top:0" width="750" height="600"><polygon points="206.31,386.15 206.31,389.05 208.07,387.60" fill="#c8c8c8"/></svg>
<span class="t" style="left:215.40px;top:386px;font-size:5px;line-height:5px;color:#666;">...</span>
<div class="r" style="left:223.40px;top:384.20px;width:0.50px;height:7.00px;background:#d6d6d6;"></div>
<div class="r" style="left:274.40px;top:384.20px;width:0.50px;height:7.00px;background:#d6d6d6;"></div>
<div class="r" style="left:303.20px;top:384.20px;width:0.50px;height:7.00px;background:#d6d6d6;"></div>
<div class="r" style="left:391.40px;top:384.20px;width:0.50px;height:7.00px;background:#d6d6d6;"></div>
<div class="r" style="left:437.50px;top:384.20px;width:0.50px;height:7.00px;background:#d6d6d6;"></div>
<div class="r" style="left:474.40px;top:384.20px;width:0.50px;height:7.00px;background:#d6d6d6;"></div>
<div class="r" style="left:496.40px;top:384.20px;width:0.50px;height:7.00px;background:#d6d6d6;"></div>
<span class="t" style="left:229.00px;top:386px;font-size:5px;line-height:5px;color:#7a7a7a;letter-spacing:-0.079px;">Countif-Diagonals</span>
<span class="t" style="left:279.40px;top:386px;font-size:5px;line-height:5px;color:#7a7a7a;letter-spacing:-0.175px;transform:scaleX(0.9903);transform-origin:0 50%;">WinTally</span>
<div class="r" style="left:303.60px;top:382.20px;width:46.60px;height:9.90px;background:#ffffff;border-bottom:1.4px solid #2f7f57;"></div>
<span class="t" style="left:308.00px;top:386px;font-size:5px;line-height:5px;color:#2f7a55;font-weight:bold;letter-spacing:-0.175px;transform:scaleX(0.9952);transform-origin:0 50%;">GameinProgress</span>
<span class="t" style="left:355.00px;top:386px;font-size:5px;line-height:5px;color:#7a7a7a;letter-spacing:-0.175px;transform:scaleX(0.9928);transform-origin:0 50%;">ShowwhoWon</span>
<span class="t" style="left:396.00px;top:386px;font-size:5px;line-height:5px;color:#7a7a7a;letter-spacing:-0.113px;">FinalStep-Macro</span>
<span class="t" style="left:442.40px;top:386px;font-size:5px;line-height:5px;color:#7a7a7a;letter-spacing:-0.068px;">WartsandAll</span>
<span class="t" style="left:479.00px;top:386px;font-size:5px;line-height:5px;color:#7a7a7a;letter-spacing:-0.175px;transform:scaleX(0.9846);transform-origin:0 50%;">Notes</span>
<svg style="left:508.4px;top:384.4px" width="7" height="7"><circle cx="3.2" cy="3.2" r="2.7" fill="none" stroke="#8a8a8a" stroke-width="0.6"/><path d="M1.8 3.2 H4.6 M3.2 1.8 V4.6" stroke="#777" stroke-width="0.6"/></svg>
<div class="r" style="left:612.90px;top:385.55px;width:0.70px;height:0.70px;background:#c4c4c4;"></div>
<div class="r" style="left:612.90px;top:387.05px;width:0.70px;height:0.70px;background:#c4c4c4;"></div>
<div class="r" style="left:612.90px;top:388.55px;width:0.70px;height:0.70px;background:#c4c4c4;"></div>
<div class="r" style="left:619.40px;top:384.00px;width:6.60px;height:7.00px;background:#fff;border:0.5px solid #d0d0d0;"></div>
<svg style="left:0;top:0" width="750" height="600"><polygon points="622.88,386.28 622.88,388.92 621.28,387.60" fill="#444"/></svg>
<div class="r" style="left:626.00px;top:384.00px;width:135.00px;height:7.00px;background:#fff;border:0.5px solid #d6d6d6;"></div>
<div class="r" style="left:185.80px;top:393.00px;width:574.20px;height:8.70px;background:#217346;"></div>
<span class="t" style="left:189.40px;top:396px;font-size:5px;line-height:5px;color:#f4faf6;letter-spacing:-0.175px;transform:scaleX(0.6966);transform-origin:0 50%;">ENTER</span>
<div class="r" style="left:208.20px;top:394.60px;width:5.20px;height:5.20px;border:0.7px solid #dcede3;border-top-width:1.2px;"></div>
<div class="r" style="left:209.70px;top:396.80px;width:0.90px;height:2.00px;background:#dcede3;"></div>
<div class="r" style="left:211.30px;top:396.80px;width:0.90px;height:2.00px;background:#dcede3;"></div>
<div class="r" style="left:185.60px;top:401.70px;width:574.40px;height:208.30px;background:#000000;"></div>
</div></div></body></html>
